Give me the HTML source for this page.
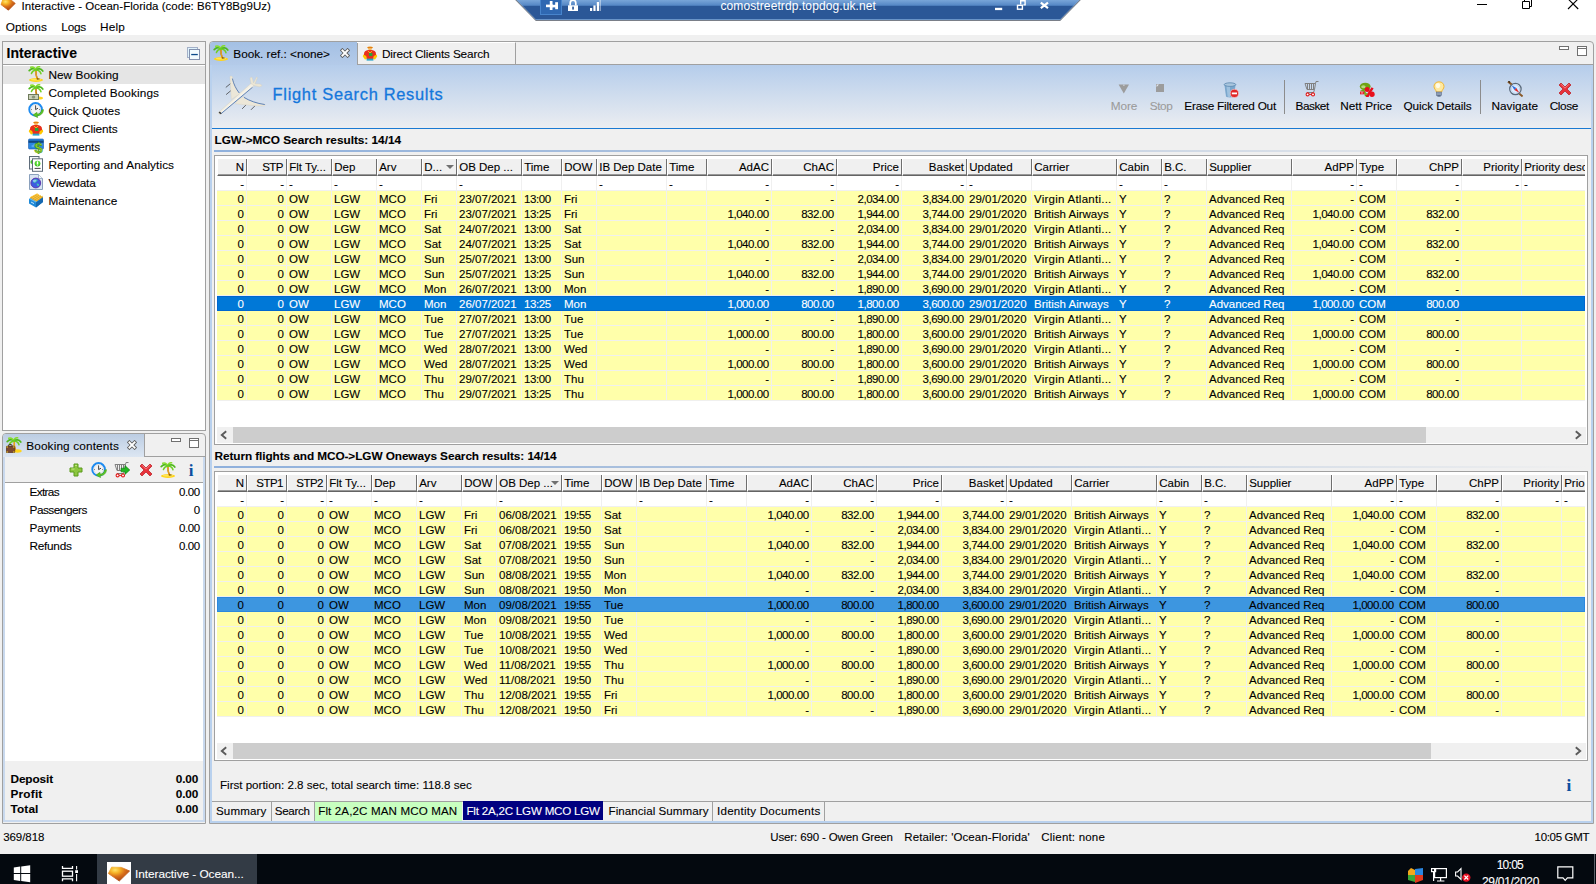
<!DOCTYPE html>
<html><head><meta charset="utf-8"><title>Interactive - Ocean-Florida</title>
<style>
html,body{margin:0;padding:0;}
body{width:1596px;height:884px;overflow:hidden;background:#f0f0f0;font-family:"Liberation Sans",sans-serif;font-size:11.5px;color:#000;position:relative;}
div,svg,i{position:absolute;box-sizing:content-box;}
.t,.c,.hc{-webkit-text-stroke:0.1px currentColor;}
.t{white-space:nowrap;}
.clip{overflow:hidden;background:#fff;}
.tblframe{border:1px solid #a0a0a0;background:#fff;}
.hc{top:0;height:17px;line-height:16px;background:#f0f0f0;border-left:1px solid #fff;border-right:1px solid #6e6e6e;border-bottom:1px solid #646464;box-shadow:inset 0 -1px 0 #989898;white-space:nowrap;overflow:hidden;font-size:11.5px;box-sizing:border-box;}
.row{left:0;width:1500px;height:15px;}
.row .c{top:0;height:15px;line-height:16px;white-space:nowrap;overflow:hidden;border-right:1px solid #f0f0f0;border-bottom:1px solid #f0f0f0;padding-left:2px;box-sizing:border-box;}
.row .c.r{text-align:right;padding-right:2px;padding-left:0;}
.frow .c{background:#fff;}
.yrow .c{background:#ffffaa;border-color:#f0f0ee;}
.selA .c{background:#0078d7;color:#fff;border-color:#0078d7;}
.selB .c{background:#3d96e0;color:#000;border-color:#3d96e0;}
.row .c.n{letter-spacing:-0.45px;padding-right:2.4px;}
.row .c.tm{letter-spacing:-0.4px;}
.row .c.vg{letter-spacing:0.25px;}
.hsb{background:#f0f0f0;}
.thumb{top:0;height:16px;background:#cdcdcd;}
.sbl{left:0;top:0;}
.sbr{right:0;top:0;}
.sorta{right:2px;top:6px;width:0;height:0;border-left:4px solid transparent;border-right:4px solid transparent;border-top:4px solid #707070;}
</style></head><body>

<div style="left:0px;top:0px;width:1596px;height:35px;background:#fff;"></div>
<svg style="left:0;top:0" width="20" height="12" viewBox="0 0 20 12"><defs><radialGradient id="gem" cx="0.32" cy="0.2" r="0.75"><stop offset="0" stop-color="#ffe46a"/><stop offset="0.3" stop-color="#f6b326"/><stop offset="0.62" stop-color="#d9701a"/><stop offset="1" stop-color="#b04a12"/></radialGradient></defs><path d="M1 4.6 L2.8 -0.5 L10.5 -0.5 L15.2 3.4 L8.4 10.2 Z" fill="url(#gem)" stroke="url(#gem)" stroke-width="0.8" stroke-linejoin="round"/></svg>
<div class="t" style="left:21.6px;top:-4px;line-height:20px;font-size:11.5px;color:#000;letter-spacing:0.028px;">Interactive - Ocean-Florida (code: B6TY8Bg9Uz)</div>
<div class="t" style="left:5.7px;top:17px;line-height:20px;font-size:11.8px;color:#000;letter-spacing:0.092px;">Options</div>
<div class="t" style="left:61.3px;top:17px;line-height:20px;font-size:11.8px;color:#000;letter-spacing:-0.223px;">Logs</div>
<div class="t" style="left:100px;top:17px;line-height:20px;font-size:11.8px;color:#000;letter-spacing:0.184px;">Help</div>
<svg style="left:1470px;top:0" width="126" height="16" viewBox="1470 0 126 16"><g stroke="#000" stroke-width="1" fill="none"><path d="M1477 4.5 H1487"/><path d="M1522.5 1.5 H1529.5 V8.5 H1522.5 Z M1524.5 1.5 V-1 M1529.5 6.5 H1531.5 V-1"/><path d="M1568 -1.2 L1578.2 9 M1578.2 -1.2 L1568 9" stroke-width="1.1"/></g></svg>
<svg style="left:505px;top:0" width="590" height="23" viewBox="505 0 590 23">
<defs><linearGradient id="rdp" x1="0" y1="0" x2="0" y2="1"><stop offset="0" stop-color="#79a5d8"/><stop offset="0.28" stop-color="#5587c5"/><stop offset="0.31" stop-color="#2b5797"/><stop offset="1" stop-color="#2b5797"/></linearGradient></defs>
<path d="M515.2 0 L1080.8 0 L1060.2 21 L535.8 21 Z" fill="#7a7f88"/>
<path d="M516.6 0 L1079.4 0 L1060 20 L536 20 Z" fill="#7fa8d8"/>
<path d="M517 0 L1079 0 L1060.2 19.2 L535.8 19.2 Z" fill="url(#rdp)"/>
<rect x="540.5" y="-1" width="21" height="15.5" fill="#2f68b2" stroke="#4784cc" stroke-width="1"/>
<g fill="#fff"><rect x="546" y="4.6" width="7" height="2.6"/><rect x="549.8" y="1" width="2.7" height="9"/><rect x="552" y="4.8" width="4" height="2.6"/><rect x="555.2" y="2.2" width="2.8" height="7"/></g>
<g fill="#fff"><rect x="568" y="5.3" width="10" height="5.7"/><path d="M570.2 5.5 V3 a2.8 2.8 0 0 1 5.6 0 V5.5" fill="none" stroke="#fff" stroke-width="1.7"/></g>
<rect x="572.2" y="6.6" width="1.7" height="3" fill="#2b5797"/>
<g fill="#fff"><rect x="590" y="8" width="2.2" height="3"/><rect x="593.4" y="5.4" width="2.2" height="5.6"/><rect x="596.8" y="2" width="2.2" height="9"/><rect x="599.6" y="0" width="1.2" height="11" opacity="0.55"/></g>
<rect x="995" y="7.8" width="7.2" height="2.3" fill="#fff"/>
<g stroke="#fff" stroke-width="2.2" fill="none"><path d="M1040.8 2.6 L1048 8.2 M1048 2.6 L1040.8 8.2"/></g>
<g stroke="#fff" stroke-width="1.4" fill="none"><rect x="1017.5" y="5.3" width="4.9" height="3.9"/><path d="M1020.7 4.6 V0.7 H1025.1 V4.9 H1023.4"/></g>
<text x="720.5" y="10.3" fill="#fff" font-family="Liberation Sans, sans-serif" font-size="12" letter-spacing="0.1">comostreetrdp.topdog.uk.net</text>
</svg>
<div style="left:2px;top:41px;width:202px;height:388px;border:1px solid #a0a0a0;background:#fff;"></div>
<div style="left:3px;top:42px;width:202px;height:22px;background:#f0f0f0;border-bottom:1px solid #a0a0a0;"></div>
<div class="t" style="left:6.5px;top:43px;line-height:20px;font-size:14px;color:#000;font-weight:700;letter-spacing:0.041px;">Interactive</div>
<svg style="left:186px;top:46px" width="16" height="14" viewBox="0 0 16 14"><rect x="1.5" y="1.5" width="10" height="10" fill="#dff3fc" stroke="#a3b0c8"/><rect x="3.5" y="3.5" width="10" height="10" fill="#f2fbff" stroke="#8391ae"/><rect x="5.2" y="7.9" width="6.6" height="1.3" fill="#0a4a8a"/></svg>
<div style="left:3px;top:66px;width:202px;height:18px;background:#e5e5e5;"></div>
<div class="t" style="left:48.4px;top:65px;line-height:20px;font-size:11.8px;color:#000;letter-spacing:0.071px;">New Booking</div>
<div class="t" style="left:48.4px;top:83px;line-height:20px;font-size:11.8px;color:#000;letter-spacing:0.102px;">Completed Bookings</div>
<div class="t" style="left:48.4px;top:101px;line-height:20px;font-size:11.8px;color:#000;letter-spacing:0.019px;">Quick Quotes</div>
<div class="t" style="left:48.4px;top:119px;line-height:20px;font-size:11.8px;color:#000;letter-spacing:-0.061px;">Direct Clients</div>
<div class="t" style="left:48.4px;top:137px;line-height:20px;font-size:11.8px;color:#000;letter-spacing:-0.094px;">Payments</div>
<div class="t" style="left:48.4px;top:155px;line-height:20px;font-size:11.8px;color:#000;letter-spacing:0.076px;">Reporting and Analytics</div>
<div class="t" style="left:48.4px;top:173px;line-height:20px;font-size:11.8px;color:#000;letter-spacing:-0.129px;">Viewdata</div>
<div class="t" style="left:48.4px;top:191px;line-height:20px;font-size:11.8px;color:#000;letter-spacing:0.131px;">Maintenance</div>
<svg style="left:28px;top:66px" width="16" height="16" viewBox="0 0 16 16"><ellipse cx="8" cy="14" rx="7" ry="1.9" fill="#ffd41c"/><ellipse cx="8" cy="13.5" rx="5" ry="1" fill="#ffe55a"/><path d="M9.6 13.4 C8.2 10.5 7.6 7.5 8 4.2" fill="none" stroke="#c8800e" stroke-width="1.7"/><path d="M9.2 12 C8.4 10 8 8 8.2 5" fill="none" stroke="#f0b030" stroke-width="0.7"/><path d="M9 13 H11.5" stroke="#4a3010" stroke-width="0.8"/><g fill="none" stroke-linecap="round"><path d="M8 4 C6 2.2 3.5 2.2 1.2 4.6" stroke="#4fb81e" stroke-width="1.7"/><path d="M8 4 C6.5 1 4.5 0.6 2.8 1.2" stroke="#86dc2e" stroke-width="1.6"/><path d="M8 4 C8.2 1.6 9.6 0.6 11.6 0.8" stroke="#86dc2e" stroke-width="1.6"/><path d="M8 4 C10.2 2.2 13 2.4 14.8 5" stroke="#4fb81e" stroke-width="1.7"/><path d="M8 4 C5.8 4.2 4 5.6 3.4 7.6" stroke="#6fcf24" stroke-width="1.5"/><path d="M8.2 4 C10.6 4.2 12.4 5.6 13 7.8" stroke="#6fcf24" stroke-width="1.5"/></g></svg>
<svg style="left:28px;top:84px" width="16" height="16" viewBox="0 0 16 16"><ellipse cx="11" cy="14" rx="4" ry="1.6" fill="#ffd41c"/><path d="M9.2 13 C8.2 10.5 7.6 7.5 8 4.2" fill="none" stroke="#c8800e" stroke-width="1.7"/><g fill="none" stroke-linecap="round"><path d="M8 4 C6 2.2 3.5 2.2 1.2 4.6" stroke="#4fb81e" stroke-width="1.7"/><path d="M8 4 C6.5 1 4.5 0.6 2.8 1.2" stroke="#86dc2e" stroke-width="1.6"/><path d="M8 4 C8.2 1.6 9.6 0.6 11.6 0.8" stroke="#86dc2e" stroke-width="1.6"/><path d="M8 4 C10.2 2.2 13 2.4 14.8 5" stroke="#4fb81e" stroke-width="1.7"/><path d="M8 4 C5.8 4.2 4 5.6 3.4 7.6" stroke="#6fcf24" stroke-width="1.5"/><path d="M8.2 4 C10.6 4.2 12.4 5.6 13 7.8" stroke="#6fcf24" stroke-width="1.5"/></g><rect x="0.5" y="10.5" width="10" height="5" fill="#c9d1b8" stroke="#6f7a5c" stroke-width="1"/><ellipse cx="5.5" cy="13" rx="1.8" ry="1.5" fill="#8a947a"/></svg>
<svg style="left:28px;top:102px" width="16" height="16" viewBox="0 0 16 16"><circle cx="7.6" cy="7.4" r="6.3" fill="#fff" stroke="#1e8bf0" stroke-width="2"/><circle cx="7.6" cy="7.4" r="4.9" fill="#f4f4f4" stroke="#b8c4d0" stroke-width="0.5"/><path d="M7.6 7.6 V4 M7.6 7.6 L10 6.2" stroke="#333" stroke-width="0.9" fill="none"/><g fill="#555"><rect x="7.2" y="3" width="0.8" height="0.8"/><rect x="7.2" y="11" width="0.8" height="0.8"/><rect x="3.2" y="7" width="0.8" height="0.8"/><rect x="11.2" y="7" width="0.8" height="0.8"/></g><path d="M15.6 7.6 C15.4 11.4 12.6 14 9.4 13.6 L9.6 15.8 L5 13 L9 10.2 L9.2 12 C11.4 12.2 13.2 10.6 13.6 8 Z" fill="#5cc421" stroke="#3a9a12" stroke-width="0.4"/></svg>
<svg style="left:28px;top:120px" width="16" height="16" viewBox="0 0 16 16"><ellipse cx="8" cy="2.6" rx="2.6" ry="1.2" fill="#f6a21a"/><circle cx="8" cy="3.6" r="1.9" fill="#f7b860"/><path d="M5.6 2.6 H10.6" stroke="#e07a10" stroke-width="1"/><path d="M2.2 7.6 C3 5.4 5.4 5 8 5 C10.6 5 13 5.4 13.8 7.6 L14.2 11 L12 11.6 L11.6 14 H4.4 L4 11.6 L1.8 11 Z" fill="#e8301c"/><path d="M1.2 9.6 L0.8 11.6 L3 14.6 L4.8 14 L4.2 11 Z M14.8 9.6 L15.2 11.6 L13 14.6 L11.2 14 L11.8 11 Z" fill="#ffc800"/><rect x="7" y="8" width="3.4" height="3" fill="#2aa23a"/><rect x="4.6" y="13.6" width="6.8" height="2" fill="#2aa6c8"/><path d="M6 6 L8 8 L10 6" fill="none" stroke="#ffd21c" stroke-width="0.8"/></svg>
<svg style="left:28px;top:138px" width="16" height="16" viewBox="0 0 16 16"><rect x="0.5" y="1" width="15" height="10" rx="1" fill="#2a86e0" stroke="#1a5cb0" stroke-width="0.6"/><rect x="0.5" y="2.6" width="15" height="2.2" fill="#12467f"/><path d="M3 8 L7 5.4 L9 6.6 L5 9.4 Z" fill="#5aa8f0"/><text x="6.6" y="15.2" font-family="Liberation Sans, sans-serif" font-weight="700" font-size="14.5" fill="#8fd22a" stroke="#3f8a10" stroke-width="0.5">$</text></svg>
<svg style="left:28px;top:156px" width="16" height="16" viewBox="0 0 16 16"><rect x="1.5" y="0.5" width="9.5" height="12.5" fill="#f4f6f8" stroke="#5e6c7a" stroke-width="1"/><circle cx="4.4" cy="6" r="2" fill="#44c626"/><rect x="4.5" y="2.8" width="10" height="12.5" fill="#fff" stroke="#5e6c7a" stroke-width="1"/><circle cx="9.5" cy="7.6" r="2.9" fill="#3dc81e"/><circle cx="9.5" cy="7" r="2" fill="#7be25a"/><rect x="9" y="5.4" width="1" height="2.6" fill="#fff"/><rect x="9" y="8.6" width="1" height="1" fill="#fff"/><path d="M6.6 12.4 H12.6" stroke="#444" stroke-width="1"/></svg>
<svg style="left:28px;top:174px" width="16" height="16" viewBox="0 0 16 16"><path d="M1.5 0.5 H10.5 L14.5 4.5 V15.5 H1.5 Z" fill="#d9e4f2" stroke="#8aa0bc" stroke-width="1"/><path d="M10.5 0.5 V4.5 H14.5" fill="#f4f8fc" stroke="#8aa0bc" stroke-width="0.8"/><circle cx="7.8" cy="9" r="4.9" fill="#3d5ce0" stroke="#5a32a8" stroke-width="0.9"/><path d="M5 7 C6 5 8.6 4.8 9.6 6.4 C9 7.6 7.4 7.4 7.2 9 C6 9.2 5.4 8.2 5 7 Z M8.6 9.6 C10 9.2 11.2 10 11 11.4 C10 12.6 9 12 8.6 9.6 Z" fill="#46c8b4"/><ellipse cx="6.4" cy="6.8" rx="1.8" ry="1.1" fill="#a8c8ff" opacity="0.8"/></svg>
<svg style="left:28px;top:192px" width="16" height="16" viewBox="0 0 16 16"><path d="M1 7 L9 3 L15 5 L15 10 L8 15.4 L1 11.6 Z" fill="#1e8ad8"/><path d="M1 7 L8 10.4 L15 5 L9 3 Z" fill="#5cb8f4"/><path d="M8 10.4 V15.4 L15 10 V5 Z" fill="#1668b0"/><g stroke="#f0a010" stroke-width="1.5" fill="none"><path d="M2.4 6 L9.6 2.2"/><path d="M4 7 L11.2 3"/><path d="M5.8 8 L13 3.8"/><path d="M7.6 9 L14.6 4.6"/></g><g stroke="#ffd84a" stroke-width="0.7" fill="none"><path d="M2.4 5.4 L9.6 1.6"/><path d="M4 6.4 L11.2 2.4"/><path d="M5.8 7.4 L13 3.2"/><path d="M7.6 8.4 L14.6 4"/></g><path d="M3 10 L6 11.6" stroke="#bfe4ff" stroke-width="1"/></svg>
<div style="left:2px;top:433px;width:202px;height:389px;border:1px solid #a0a0a0;border-radius:4px 4px 0 0;background:#f0f0f0;"></div>
<div style="left:3px;top:434px;width:141px;height:23px;background:linear-gradient(#bccde3,#dce6f2);border-radius:3px 0 0 0;border-right:1px solid #a0a0a0;"></div>
<div style="left:144px;top:456px;width:61px;height:1px;background:#a0a0a0;"></div>
<div class="t" style="left:26.2px;top:436px;line-height:20px;font-size:11.8px;color:#000;letter-spacing:0.143px;">Booking contents</div>
<svg style="left:127px;top:440px" width="10" height="10" viewBox="0 0 10 10"><path d="M2.4 2.4 L7.6 7.6 M7.6 2.4 L2.4 7.6" stroke="#5c5c5c" stroke-width="3.6" stroke-linecap="square" fill="none"/><path d="M2.4 2.4 L7.6 7.6 M7.6 2.4 L2.4 7.6" stroke="#fff" stroke-width="1.9" stroke-linecap="square" fill="none"/></svg>
<svg style="left:170px;top:437px" width="32" height="13" viewBox="0 0 32 13"><g fill="#fff" stroke="#707070" stroke-width="1"><rect x="1.5" y="1.5" width="9" height="3"/><rect x="19.5" y="1.5" width="9" height="9"/><path d="M19.5 3.5 H28.5"/></g></svg>
<div style="left:3px;top:457px;width:202px;height:364px;border-left:2px solid #c9d9ee;border-right:2px solid #c9d9ee;border-bottom:2px solid #c9d9ee;width:198px;height:363px;"></div>
<div style="left:5px;top:482px;width:198px;height:1px;background:#a0a0a0;"></div>
<div style="left:5px;top:483px;width:198px;height:278px;background:#fff;"></div>
<div class="t" style="left:29.5px;top:482px;line-height:20px;font-size:11.8px;color:#000;letter-spacing:-0.656px;">Extras</div>
<div class="t" style="left:139.8px;top:482px;line-height:20px;font-size:11.5px;color:#000;letter-spacing:-0.4px;width:60px;text-align:right;">0.00</div>
<div class="t" style="left:29.5px;top:500px;line-height:20px;font-size:11.8px;color:#000;letter-spacing:-0.49px;">Passengers</div>
<div class="t" style="left:139.8px;top:500px;line-height:20px;font-size:11.5px;color:#000;letter-spacing:-0.4px;width:60px;text-align:right;">0</div>
<div class="t" style="left:29.5px;top:518px;line-height:20px;font-size:11.8px;color:#000;letter-spacing:-0.144px;">Payments</div>
<div class="t" style="left:139.8px;top:518px;line-height:20px;font-size:11.5px;color:#000;letter-spacing:-0.4px;width:60px;text-align:right;">0.00</div>
<div class="t" style="left:29.5px;top:536px;line-height:20px;font-size:11.8px;color:#000;letter-spacing:-0.265px;">Refunds</div>
<div class="t" style="left:139.8px;top:536px;line-height:20px;font-size:11.5px;color:#000;letter-spacing:-0.4px;width:60px;text-align:right;">0.00</div>
<div class="t" style="left:10.5px;top:769px;line-height:20px;font-size:11.8px;color:#000;font-weight:700;letter-spacing:-0.109px;">Deposit</div>
<div class="t" style="left:138px;top:769px;line-height:20px;font-size:11.8px;color:#000;font-weight:700;letter-spacing:-0.2px;width:60px;text-align:right;">0.00</div>
<div class="t" style="left:10.5px;top:784px;line-height:20px;font-size:11.8px;color:#000;font-weight:700;letter-spacing:0.198px;">Profit</div>
<div class="t" style="left:138px;top:784px;line-height:20px;font-size:11.8px;color:#000;font-weight:700;letter-spacing:-0.2px;width:60px;text-align:right;">0.00</div>
<div class="t" style="left:10.5px;top:799px;line-height:20px;font-size:11.8px;color:#000;font-weight:700;letter-spacing:0.138px;">Total</div>
<div class="t" style="left:138px;top:799px;line-height:20px;font-size:11.8px;color:#000;font-weight:700;letter-spacing:-0.2px;width:60px;text-align:right;">0.00</div>
<svg style="left:6px;top:437px" width="16" height="16" viewBox="0 0 16 16"><ellipse cx="11.5" cy="14" rx="4.2" ry="1.7" fill="#ffd41c"/><path d="M9.4 13 C8.4 10.5 7.8 7.5 8.2 4.2" fill="none" stroke="#e6a21a" stroke-width="1.7"/><g fill="none" stroke-linecap="round"><path d="M8 4 C6 2.2 3.5 2.2 1.2 4.6" stroke="#4fb81e" stroke-width="1.7"/><path d="M8 4 C6.5 1 4.5 0.6 2.8 1.2" stroke="#86dc2e" stroke-width="1.6"/><path d="M8 4 C8.2 1.6 9.6 0.6 11.6 0.8" stroke="#86dc2e" stroke-width="1.6"/><path d="M8 4 C10.2 2.2 13 2.4 14.8 5" stroke="#4fb81e" stroke-width="1.7"/><path d="M8 4 C5.8 4.2 4 5.6 3.4 7.6" stroke="#6fcf24" stroke-width="1.5"/><path d="M8.2 4 C10.6 4.2 12.4 5.6 13 7.8" stroke="#6fcf24" stroke-width="1.5"/></g><rect x="2.6" y="7.6" width="3.4" height="2.4" rx="0.8" fill="none" stroke="#4a2a1a" stroke-width="1"/><rect x="0.3" y="9.2" width="8.4" height="6.6" rx="0.8" fill="#7b4a32" stroke="#4a2a1a" stroke-width="0.7"/><g fill="#ffd41c"><rect x="0.6" y="9.4" width="1.2" height="1.2"/><rect x="7.2" y="9.4" width="1.2" height="1.2"/><rect x="0.6" y="14.4" width="1.2" height="1.2"/><rect x="7.2" y="14.4" width="1.2" height="1.2"/></g></svg>
<svg style="left:68px;top:462px" width="16" height="16" viewBox="0 0 16 16"><path d="M6 2 H10 V6 H14 V10 H10 V14 H6 V10 H2 V6 H6 Z" fill="#8cc63e" stroke="#5a9a1c" stroke-width="1" stroke-linejoin="round"/><path d="M7 3.4 H9 M3.4 7 H6.4" stroke="#c9ec8a" stroke-width="1" fill="none"/></svg>
<svg style="left:91px;top:462px" width="16" height="16" viewBox="0 0 16 16"><circle cx="7.6" cy="7.4" r="6.3" fill="#fff" stroke="#1e8bf0" stroke-width="2"/><circle cx="7.6" cy="7.4" r="4.9" fill="#f4f4f4" stroke="#b8c4d0" stroke-width="0.5"/><path d="M7.6 7.6 V4 M7.6 7.6 L10 6.2" stroke="#333" stroke-width="0.9" fill="none"/><g fill="#555"><rect x="7.2" y="3" width="0.8" height="0.8"/><rect x="7.2" y="11" width="0.8" height="0.8"/><rect x="3.2" y="7" width="0.8" height="0.8"/><rect x="11.2" y="7" width="0.8" height="0.8"/></g><path d="M15.6 7.6 C15.4 11.4 12.6 14 9.4 13.6 L9.6 15.8 L5 13 L9 10.2 L9.2 12 C11.4 12.2 13.2 10.6 13.6 8 Z" fill="#5cc421" stroke="#3a9a12" stroke-width="0.4"/></svg>
<svg style="left:114px;top:462px" width="16" height="16" viewBox="0 0 16 16"><g stroke="#808080" stroke-width="1" fill="none"><path d="M1 2.5 H11.5 L10.5 8.5 H3 Z"/><path d="M3.5 2.5 V8.5 M5.5 2.5 V8.5 M7.5 2.5 V8.5 M9.5 2.5 V8.5"/><path d="M11.5 2.5 L12 0.5 H14.5"/><path d="M10.5 8.5 L9.5 11.5 H3"/></g><circle cx="3.6" cy="13.4" r="1.5" fill="#fff" stroke="#e01818" stroke-width="1.1"/><circle cx="9" cy="13.4" r="1.5" fill="#fff" stroke="#e01818" stroke-width="1.1"/><path d="M5.1 13.4 H7.5" stroke="#e01818" stroke-width="1"/><path d="M7 6.2 H11 V3.6 L15.8 8 L11 12.4 V9.8 H7 Z" fill="#22b822" stroke="#0e7a0e" stroke-width="0.6"/></svg>
<svg style="left:137.5px;top:462px" width="16" height="16" viewBox="0 0 16 16"><path d="M2 4 L4 2 L8 6 L12 2 L14 4 L10 8 L14 12 L12 14 L8 10 L4 14 L2 12 L6 8 Z" fill="#e8323a" stroke="#b81820" stroke-width="0.7" stroke-linejoin="round"/><path d="M4 3.2 L8 7.2 L12 3.2" fill="none" stroke="#f8888c" stroke-width="0.9"/></svg>
<svg style="left:160px;top:462px" width="16" height="16" viewBox="0 0 16 16"><ellipse cx="8" cy="14" rx="7" ry="1.9" fill="#ffd41c"/><ellipse cx="8" cy="13.5" rx="5" ry="1" fill="#ffe55a"/><path d="M9.6 13.4 C8.2 10.5 7.6 7.5 8 4.2" fill="none" stroke="#c8800e" stroke-width="1.7"/><path d="M9.2 12 C8.4 10 8 8 8.2 5" fill="none" stroke="#f0b030" stroke-width="0.7"/><path d="M9 13 H11.5" stroke="#4a3010" stroke-width="0.8"/><g fill="none" stroke-linecap="round"><path d="M8 4 C6 2.2 3.5 2.2 1.2 4.6" stroke="#4fb81e" stroke-width="1.7"/><path d="M8 4 C6.5 1 4.5 0.6 2.8 1.2" stroke="#86dc2e" stroke-width="1.6"/><path d="M8 4 C8.2 1.6 9.6 0.6 11.6 0.8" stroke="#86dc2e" stroke-width="1.6"/><path d="M8 4 C10.2 2.2 13 2.4 14.8 5" stroke="#4fb81e" stroke-width="1.7"/><path d="M8 4 C5.8 4.2 4 5.6 3.4 7.6" stroke="#6fcf24" stroke-width="1.5"/><path d="M8.2 4 C10.6 4.2 12.4 5.6 13 7.8" stroke="#6fcf24" stroke-width="1.5"/></g></svg>
<svg style="left:183px;top:462px" width="16" height="16" viewBox="0 0 16 16"><text x="8" y="14" text-anchor="middle" font-family="Liberation Serif, serif" font-weight="700" font-size="17" fill="#0c4fa0">i</text></svg>
<div style="left:209px;top:41px;width:1383px;height:781px;border:1px solid #a0a0a0;border-radius:4px 4px 0 0;background:#f0f0f0;"></div>
<div style="left:210px;top:42px;width:147px;height:23px;background:linear-gradient(#a4c0e4,#b4cbe9);border-radius:3px 0 0 0;border-right:1px solid #a0a0a0;"></div>
<div style="left:357px;top:42px;width:158px;height:22px;border-right:1px solid #a0a0a0;border-top:1px solid #fff;height:21px;"></div>
<div style="left:357px;top:64px;width:1236px;height:1px;background:#a0a0a0;"></div>
<svg style="left:213px;top:44.5px" width="16" height="16" viewBox="0 0 16 16"><ellipse cx="8" cy="14" rx="7" ry="1.9" fill="#ffd41c"/><ellipse cx="8" cy="13.5" rx="5" ry="1" fill="#ffe55a"/><path d="M9.6 13.4 C8.2 10.5 7.6 7.5 8 4.2" fill="none" stroke="#c8800e" stroke-width="1.7"/><path d="M9.2 12 C8.4 10 8 8 8.2 5" fill="none" stroke="#f0b030" stroke-width="0.7"/><path d="M9 13 H11.5" stroke="#4a3010" stroke-width="0.8"/><g fill="none" stroke-linecap="round"><path d="M8 4 C6 2.2 3.5 2.2 1.2 4.6" stroke="#4fb81e" stroke-width="1.7"/><path d="M8 4 C6.5 1 4.5 0.6 2.8 1.2" stroke="#86dc2e" stroke-width="1.6"/><path d="M8 4 C8.2 1.6 9.6 0.6 11.6 0.8" stroke="#86dc2e" stroke-width="1.6"/><path d="M8 4 C10.2 2.2 13 2.4 14.8 5" stroke="#4fb81e" stroke-width="1.7"/><path d="M8 4 C5.8 4.2 4 5.6 3.4 7.6" stroke="#6fcf24" stroke-width="1.5"/><path d="M8.2 4 C10.6 4.2 12.4 5.6 13 7.8" stroke="#6fcf24" stroke-width="1.5"/></g></svg>
<svg style="left:362px;top:45px" width="16" height="16" viewBox="0 0 16 16"><ellipse cx="8" cy="2.6" rx="2.6" ry="1.2" fill="#f6a21a"/><circle cx="8" cy="3.6" r="1.9" fill="#f7b860"/><path d="M5.6 2.6 H10.6" stroke="#e07a10" stroke-width="1"/><path d="M2.2 7.6 C3 5.4 5.4 5 8 5 C10.6 5 13 5.4 13.8 7.6 L14.2 11 L12 11.6 L11.6 14 H4.4 L4 11.6 L1.8 11 Z" fill="#e8301c"/><path d="M1.2 9.6 L0.8 11.6 L3 14.6 L4.8 14 L4.2 11 Z M14.8 9.6 L15.2 11.6 L13 14.6 L11.2 14 L11.8 11 Z" fill="#ffc800"/><rect x="7" y="8" width="3.4" height="3" fill="#2aa23a"/><rect x="4.6" y="13.6" width="6.8" height="2" fill="#2aa6c8"/><path d="M6 6 L8 8 L10 6" fill="none" stroke="#ffd21c" stroke-width="0.8"/></svg>
<div class="t" style="left:233.3px;top:44px;line-height:20px;font-size:11.8px;color:#000;letter-spacing:-0.021px;">Book. ref.: &lt;none&gt;</div>
<div class="t" style="left:382px;top:44px;line-height:20px;font-size:11.8px;color:#000;letter-spacing:-0.167px;">Direct Clients Search</div>
<svg style="left:340px;top:48px" width="10" height="10" viewBox="0 0 10 10"><path d="M2.4 2.4 L7.6 7.6 M7.6 2.4 L2.4 7.6" stroke="#5c5c5c" stroke-width="3.6" stroke-linecap="square" fill="none"/><path d="M2.4 2.4 L7.6 7.6 M7.6 2.4 L2.4 7.6" stroke="#fff" stroke-width="1.9" stroke-linecap="square" fill="none"/></svg>
<svg style="left:1558px;top:45px" width="32" height="13" viewBox="0 0 32 13"><g fill="#fff" stroke="#707070" stroke-width="1"><rect x="1.5" y="1.5" width="9" height="3"/><rect x="19.5" y="1.5" width="9" height="9"/><path d="M19.5 3.5 H28.5"/></g></svg>
<div style="left:210px;top:65px;width:2px;height:757px;background:#b9d1ee;"></div>
<div style="left:1591px;top:65px;width:2px;height:757px;background:#b9d1ee;"></div>
<div style="left:210px;top:821px;width:1383px;height:2px;background:#b9d1ee;"></div>
<div style="left:212px;top:65px;width:1379px;height:63px;background:linear-gradient(#b5cdeb,#ebedf1);"></div>
<div style="left:212px;top:128px;width:1379px;height:1px;background:#1979d2;"></div>
<div class="t" style="left:272.6px;top:84px;line-height:20px;font-size:16.4px;color:#1477dc;letter-spacing:0.715px;-webkit-text-stroke:0.3px #1477dc;">Flight Search Results</div>
<svg style="left:212px;top:66px" width="80" height="60" viewBox="0 0 1179 884">
<g stroke="#3a3a3a" stroke-width="11" stroke-linecap="round"><path d="M208 312 L290 245"/><path d="M212 418 L300 345"/><path d="M448 628 L525 548"/><path d="M578 642 L660 560"/></g>
<path d="M278 148 C262 150 262 165 266 185 L285 492 L410 410 C360 340 320 250 300 160 C296 150 288 146 278 148 Z" fill="#ece7d8" stroke="#d4cebc" stroke-width="5"/>
<path d="M300 185 C320 270 355 340 402 398" fill="none" stroke="#2f62b0" stroke-width="11"/>
<path d="M462 452 C540 505 660 550 775 562 C790 566 790 580 775 586 C740 596 600 585 340 556 L380 500 Z" fill="#ece7d8" stroke="#d4cebc" stroke-width="5"/>
<path d="M470 462 C550 512 660 552 778 568" fill="none" stroke="#2f62b0" stroke-width="11"/>
<path d="M578 272 L560 185 C565 170 585 160 592 170 L612 250 L655 165 C662 158 672 168 668 178 L634 262 L700 264 C720 268 738 280 734 290 C720 304 700 306 688 304 L604 284 Z" fill="#ebe6d6" stroke="#cfc9b6" stroke-width="5"/>
<path d="M96 684 C90 698 108 720 130 710 L608 310 C624 294 600 254 566 266 Z" fill="#f3efe3" stroke="#d2ccba" stroke-width="5"/>
<path d="M150 676 L560 312" fill="none" stroke="#fbf9f2" stroke-width="10"/>
<path d="M134 702 L598 312" fill="none" stroke="#2f62b0" stroke-width="11"/>
<path d="M98 684 L122 712 L142 698 L116 672 Z" fill="#3c3c3c"/>
</svg>
<div class="t" style="left:1110.7px;top:96px;line-height:20px;font-size:11.8px;color:#9b9b9b;letter-spacing:-0.098px;">More</div>
<div class="t" style="left:1149.7px;top:96px;line-height:20px;font-size:11.8px;color:#9b9b9b;letter-spacing:-0.42px;">Stop</div>
<div class="t" style="left:1184.3px;top:96px;line-height:20px;font-size:11.8px;color:#000;letter-spacing:-0.224px;">Erase Filtered Out</div>
<div class="t" style="left:1295.5px;top:96px;line-height:20px;font-size:11.8px;color:#000;letter-spacing:-0.463px;">Basket</div>
<div class="t" style="left:1340.3px;top:96px;line-height:20px;font-size:11.8px;color:#000;letter-spacing:-0.01px;">Nett Price</div>
<div class="t" style="left:1403.5px;top:96px;line-height:20px;font-size:11.8px;color:#000;letter-spacing:-0.115px;">Quick Details</div>
<div class="t" style="left:1491.5px;top:96px;line-height:20px;font-size:11.8px;color:#000;letter-spacing:-0.008px;">Navigate</div>
<div class="t" style="left:1549.7px;top:96px;line-height:20px;font-size:11.8px;color:#000;letter-spacing:-0.374px;">Close</div>
<div style="left:1284px;top:80px;width:1px;height:34px;background:#8c8c8c;"></div>
<div style="left:1480px;top:80px;width:1px;height:34px;background:#8c8c8c;"></div>
<svg style="left:1116px;top:80.5px" width="16" height="16" viewBox="0 0 16 16"><path d="M2.6 3.6 H13 L7.8 12.6 Z" fill="#9c9c9c"/><rect x="7.4" y="3.6" width="1" height="1.4" fill="#d8dde6"/></svg>
<svg style="left:1152px;top:80px" width="16" height="16" viewBox="0 0 16 16"><rect x="4" y="4" width="8" height="8" fill="#9c9c9c"/><path d="M4.6 4.6 H7 L4.6 7 Z" fill="#e6eaf2"/></svg>
<svg style="left:1223px;top:81.5px" width="16" height="16" viewBox="0 0 16 16"><path d="M1.4 2.6 L3 14.6 C5 15.8 9 15.8 11 14.6 L12.6 2.6 Z" fill="#7aa6cc"/><path d="M3.4 4 L4.6 14.6 C5.6 15 6.4 15.1 7 15.1 L7 4 Z" fill="#a8c8e4" opacity="0.8"/><ellipse cx="7" cy="2.6" rx="5.8" ry="1.8" fill="#a9c6de" stroke="#5b86ae" stroke-width="0.8"/><circle cx="11.4" cy="11.4" r="4.1" fill="#e02626" stroke="#f6c6c6" stroke-width="0.7"/><rect x="8.8" y="10.5" width="5.2" height="1.8" fill="#fff"/></svg>
<svg style="left:1303.5px;top:80.8px" width="16" height="16" viewBox="0 0 16 16"><g stroke="#808080" stroke-width="1" fill="none"><path d="M1 2.5 H11.5 L10.5 8.5 H3 Z"/><path d="M3.5 2.5 V8.5 M5.5 2.5 V8.5 M7.5 2.5 V8.5 M9.5 2.5 V8.5"/><path d="M11.5 2.5 L12 0.5 H14.5"/><path d="M10.5 8.5 L9.5 11.5 H3"/></g><circle cx="3.6" cy="13.4" r="1.5" fill="#fff" stroke="#e01818" stroke-width="1.1"/><circle cx="9" cy="13.4" r="1.5" fill="#fff" stroke="#e01818" stroke-width="1.1"/><path d="M5.1 13.4 H7.5" stroke="#e01818" stroke-width="1"/></svg>
<svg style="left:1358.5px;top:80.6px" width="16" height="16" viewBox="0 0 16 16"><ellipse cx="6.2" cy="5.6" rx="5.4" ry="3.9" fill="#6fa414"/><ellipse cx="4.4" cy="5.8" rx="2.2" ry="1.5" fill="#b9d97c"/><path d="M0.8 10 L4 8.6 L6 9.4 L8 14.6 L6 15.4 L4.6 10.6 Z" fill="#6fa414"/><g fill="#e8101c"><rect x="1" y="10.6" width="4.2" height="2.7"/><circle cx="8.2" cy="8.6" r="2.5"/><circle cx="13" cy="13.2" r="2.7"/><circle cx="8.4" cy="14.6" r="1.7"/><path d="M12.6 6.2 L14.6 7.6 L9 16 L7 14.6 Z"/></g><rect x="1.8" y="11.5" width="2.4" height="0.9" fill="#ffd0d0"/><ellipse cx="7.2" cy="13" rx="1.4" ry="1" fill="#7db52a"/></svg>
<svg style="left:1431px;top:81px" width="16" height="16" viewBox="0 0 16 16"><path d="M8 0.8 C4.6 0.8 3 3.2 3 5.4 C3 7.8 5 8.8 5.4 11 H10.6 C11 8.8 13 7.8 13 5.4 C13 3.2 11.4 0.8 8 0.8 Z" fill="#ffe9a0" stroke="#f2b632" stroke-width="1"/><ellipse cx="7" cy="4.6" rx="2.2" ry="2.6" fill="#fffbe6"/><rect x="5.6" y="11" width="4.8" height="3.4" fill="#8c9cb4" stroke="#5c6c88" stroke-width="0.6"/><rect x="6.4" y="14.4" width="3.2" height="1.2" fill="#4c5c78"/></svg>
<svg style="left:1506.6px;top:80.8px" width="16" height="16" viewBox="0 0 16 16"><circle cx="8.4" cy="8" r="5.7" fill="#eef6ff" stroke="#5a6a7c" stroke-width="1.3"/><circle cx="8.4" cy="8" r="4.3" fill="#dcecff" stroke="#9ab8dc" stroke-width="0.6"/><path d="M4.6 4.2 L9.4 7 L7.4 9 Z" fill="#2a6ee0"/><path d="M12.2 11.8 L7.4 9 L9.4 7 Z" fill="#e02a2a"/><path d="M1 0.6 L4.6 3.4 M12.4 12.8 L15.6 15.4" stroke="#8a5a2a" stroke-width="2"/><path d="M1.6 0.2 L3 1.6" stroke="#3a2a1a" stroke-width="1.4"/></svg>
<svg style="left:1557px;top:81px" width="16" height="16" viewBox="0 0 16 16"><path d="M2 4 L4 2 L8 6 L12 2 L14 4 L10 8 L14 12 L12 14 L8 10 L4 14 L2 12 L6 8 Z" fill="#e8323a" stroke="#b81820" stroke-width="0.7" stroke-linejoin="round"/><path d="M4 3.2 L8 7.2 L12 3.2" fill="none" stroke="#f8888c" stroke-width="0.9"/></svg>
<div class="t" style="left:214.5px;top:130px;line-height:20px;font-size:11.8px;color:#000;font-weight:700;letter-spacing:-0.015px;">LGW-&gt;MCO Search results: 14/14</div>
<div style="left:214px;top:150px;width:1375px;height:2px;background:linear-gradient(90deg,#8fb0dc,#b9c9de 50%,#f0f0f0);"></div>
<div class="t" style="left:214.5px;top:446px;line-height:20px;font-size:11.8px;color:#000;font-weight:700;letter-spacing:-0.078px;">Return flights and MCO-&gt;LGW Oneways Search results: 14/14</div>
<div style="left:214px;top:466px;width:1375px;height:2px;background:linear-gradient(90deg,#8fb0dc,#b9c9de 50%,#f0f0f0);"></div>
<div class="tblframe" style="left:214px;top:155px;width:1372px;height:288px;"></div>
<div class="clip" style="left:217px;top:159px;width:1368px;height:266px;">
<div class="hc" style="left:0px;width:30px;text-align:right;padding-right:2px;">N</div>
<div class="hc" style="left:30px;width:40px;text-align:right;padding-right:2px;letter-spacing:-0.5px;padding-right:3px;">STP</div>
<div class="hc" style="left:70px;width:45px;padding-left:1.2px;">Flt Ty...</div>
<div class="hc" style="left:115px;width:45px;padding-left:1.2px;">Dep</div>
<div class="hc" style="left:160px;width:45px;padding-left:1.2px;">Arv</div>
<div class="hc" style="left:205px;width:35px;padding-left:1.2px;">D...<i class="sorta"></i></div>
<div class="hc" style="left:240px;width:65px;padding-left:1.2px;">OB Dep ...</div>
<div class="hc" style="left:305px;width:40px;padding-left:1.2px;">Time</div>
<div class="hc" style="left:345px;width:35px;padding-left:1.2px;">DOW</div>
<div class="hc" style="left:380px;width:70px;padding-left:1.2px;">IB Dep Date</div>
<div class="hc" style="left:450px;width:40px;padding-left:1.2px;">Time</div>
<div class="hc" style="left:490px;width:65px;text-align:right;padding-right:2px;">AdAC</div>
<div class="hc" style="left:555px;width:65px;text-align:right;padding-right:2px;">ChAC</div>
<div class="hc" style="left:620px;width:65px;text-align:right;padding-right:2px;">Price</div>
<div class="hc" style="left:685px;width:65px;text-align:right;padding-right:2px;">Basket</div>
<div class="hc" style="left:750px;width:65px;padding-left:1.2px;">Updated</div>
<div class="hc" style="left:815px;width:85px;padding-left:1.2px;">Carrier</div>
<div class="hc" style="left:900px;width:45px;padding-left:1.2px;">Cabin</div>
<div class="hc" style="left:945px;width:45px;padding-left:1.2px;">B.C.</div>
<div class="hc" style="left:990px;width:85px;padding-left:1.2px;">Supplier</div>
<div class="hc" style="left:1075px;width:65px;text-align:right;padding-right:2px;">AdPP</div>
<div class="hc" style="left:1140px;width:40px;padding-left:1.2px;">Type</div>
<div class="hc" style="left:1180px;width:65px;text-align:right;padding-right:2px;">ChPP</div>
<div class="hc" style="left:1245px;width:60px;text-align:right;padding-right:2px;">Priority</div>
<div class="hc" style="left:1305px;width:90px;padding-left:1.2px;">Priority desc</div>
<div class="row frow" style="top:17px;">
<div class="c r" style="left:0px;width:30px;">-</div>
<div class="c r" style="left:30px;width:40px;">-</div>
<div class="c" style="left:70px;width:45px;">-</div>
<div class="c" style="left:115px;width:45px;">-</div>
<div class="c" style="left:160px;width:45px;">-</div>
<div class="c" style="left:205px;width:35px;"></div>
<div class="c" style="left:240px;width:65px;">-</div>
<div class="c" style="left:305px;width:40px;"></div>
<div class="c" style="left:345px;width:35px;"></div>
<div class="c" style="left:380px;width:70px;">-</div>
<div class="c" style="left:450px;width:40px;">-</div>
<div class="c r" style="left:490px;width:65px;">-</div>
<div class="c r" style="left:555px;width:65px;">-</div>
<div class="c r" style="left:620px;width:65px;">-</div>
<div class="c r" style="left:685px;width:65px;">-</div>
<div class="c" style="left:750px;width:65px;">-</div>
<div class="c" style="left:815px;width:85px;"></div>
<div class="c" style="left:900px;width:45px;">-</div>
<div class="c" style="left:945px;width:45px;">-</div>
<div class="c" style="left:990px;width:85px;"></div>
<div class="c r" style="left:1075px;width:65px;">-</div>
<div class="c" style="left:1140px;width:40px;">-</div>
<div class="c r" style="left:1180px;width:65px;">-</div>
<div class="c r" style="left:1245px;width:60px;">-</div>
<div class="c" style="left:1305px;width:90px;">-</div>
</div>
<div class="row yrow" style="top:32px;">
<div class="c r" style="left:0px;width:30px;">0</div>
<div class="c r" style="left:30px;width:40px;">0</div>
<div class="c" style="left:70px;width:45px;">OW</div>
<div class="c" style="left:115px;width:45px;">LGW</div>
<div class="c" style="left:160px;width:45px;">MCO</div>
<div class="c" style="left:205px;width:35px;">Fri</div>
<div class="c" style="left:240px;width:65px;">23/07/2021</div>
<div class="c tm" style="left:305px;width:40px;">13:00</div>
<div class="c" style="left:345px;width:35px;">Fri</div>
<div class="c" style="left:380px;width:70px;"></div>
<div class="c" style="left:450px;width:40px;"></div>
<div class="c r" style="left:490px;width:65px;">-</div>
<div class="c r" style="left:555px;width:65px;">-</div>
<div class="c r n" style="left:620px;width:65px;">2,034.00</div>
<div class="c r n" style="left:685px;width:65px;">3,834.00</div>
<div class="c" style="left:750px;width:65px;">29/01/2020</div>
<div class="c vg" style="left:815px;width:85px;">Virgin Atlanti...</div>
<div class="c" style="left:900px;width:45px;">Y</div>
<div class="c" style="left:945px;width:45px;">?</div>
<div class="c" style="left:990px;width:85px;">Advanced Req</div>
<div class="c r" style="left:1075px;width:65px;">-</div>
<div class="c" style="left:1140px;width:40px;">COM</div>
<div class="c r" style="left:1180px;width:65px;">-</div>
<div class="c r" style="left:1245px;width:60px;"></div>
<div class="c" style="left:1305px;width:90px;"></div>
</div>
<div class="row yrow" style="top:47px;">
<div class="c r" style="left:0px;width:30px;">0</div>
<div class="c r" style="left:30px;width:40px;">0</div>
<div class="c" style="left:70px;width:45px;">OW</div>
<div class="c" style="left:115px;width:45px;">LGW</div>
<div class="c" style="left:160px;width:45px;">MCO</div>
<div class="c" style="left:205px;width:35px;">Fri</div>
<div class="c" style="left:240px;width:65px;">23/07/2021</div>
<div class="c tm" style="left:305px;width:40px;">13:25</div>
<div class="c" style="left:345px;width:35px;">Fri</div>
<div class="c" style="left:380px;width:70px;"></div>
<div class="c" style="left:450px;width:40px;"></div>
<div class="c r n" style="left:490px;width:65px;">1,040.00</div>
<div class="c r n" style="left:555px;width:65px;">832.00</div>
<div class="c r n" style="left:620px;width:65px;">1,944.00</div>
<div class="c r n" style="left:685px;width:65px;">3,744.00</div>
<div class="c" style="left:750px;width:65px;">29/01/2020</div>
<div class="c" style="left:815px;width:85px;">British Airways</div>
<div class="c" style="left:900px;width:45px;">Y</div>
<div class="c" style="left:945px;width:45px;">?</div>
<div class="c" style="left:990px;width:85px;">Advanced Req</div>
<div class="c r n" style="left:1075px;width:65px;">1,040.00</div>
<div class="c" style="left:1140px;width:40px;">COM</div>
<div class="c r n" style="left:1180px;width:65px;">832.00</div>
<div class="c r" style="left:1245px;width:60px;"></div>
<div class="c" style="left:1305px;width:90px;"></div>
</div>
<div class="row yrow" style="top:62px;">
<div class="c r" style="left:0px;width:30px;">0</div>
<div class="c r" style="left:30px;width:40px;">0</div>
<div class="c" style="left:70px;width:45px;">OW</div>
<div class="c" style="left:115px;width:45px;">LGW</div>
<div class="c" style="left:160px;width:45px;">MCO</div>
<div class="c" style="left:205px;width:35px;">Sat</div>
<div class="c" style="left:240px;width:65px;">24/07/2021</div>
<div class="c tm" style="left:305px;width:40px;">13:00</div>
<div class="c" style="left:345px;width:35px;">Sat</div>
<div class="c" style="left:380px;width:70px;"></div>
<div class="c" style="left:450px;width:40px;"></div>
<div class="c r" style="left:490px;width:65px;">-</div>
<div class="c r" style="left:555px;width:65px;">-</div>
<div class="c r n" style="left:620px;width:65px;">2,034.00</div>
<div class="c r n" style="left:685px;width:65px;">3,834.00</div>
<div class="c" style="left:750px;width:65px;">29/01/2020</div>
<div class="c vg" style="left:815px;width:85px;">Virgin Atlanti...</div>
<div class="c" style="left:900px;width:45px;">Y</div>
<div class="c" style="left:945px;width:45px;">?</div>
<div class="c" style="left:990px;width:85px;">Advanced Req</div>
<div class="c r" style="left:1075px;width:65px;">-</div>
<div class="c" style="left:1140px;width:40px;">COM</div>
<div class="c r" style="left:1180px;width:65px;">-</div>
<div class="c r" style="left:1245px;width:60px;"></div>
<div class="c" style="left:1305px;width:90px;"></div>
</div>
<div class="row yrow" style="top:77px;">
<div class="c r" style="left:0px;width:30px;">0</div>
<div class="c r" style="left:30px;width:40px;">0</div>
<div class="c" style="left:70px;width:45px;">OW</div>
<div class="c" style="left:115px;width:45px;">LGW</div>
<div class="c" style="left:160px;width:45px;">MCO</div>
<div class="c" style="left:205px;width:35px;">Sat</div>
<div class="c" style="left:240px;width:65px;">24/07/2021</div>
<div class="c tm" style="left:305px;width:40px;">13:25</div>
<div class="c" style="left:345px;width:35px;">Sat</div>
<div class="c" style="left:380px;width:70px;"></div>
<div class="c" style="left:450px;width:40px;"></div>
<div class="c r n" style="left:490px;width:65px;">1,040.00</div>
<div class="c r n" style="left:555px;width:65px;">832.00</div>
<div class="c r n" style="left:620px;width:65px;">1,944.00</div>
<div class="c r n" style="left:685px;width:65px;">3,744.00</div>
<div class="c" style="left:750px;width:65px;">29/01/2020</div>
<div class="c" style="left:815px;width:85px;">British Airways</div>
<div class="c" style="left:900px;width:45px;">Y</div>
<div class="c" style="left:945px;width:45px;">?</div>
<div class="c" style="left:990px;width:85px;">Advanced Req</div>
<div class="c r n" style="left:1075px;width:65px;">1,040.00</div>
<div class="c" style="left:1140px;width:40px;">COM</div>
<div class="c r n" style="left:1180px;width:65px;">832.00</div>
<div class="c r" style="left:1245px;width:60px;"></div>
<div class="c" style="left:1305px;width:90px;"></div>
</div>
<div class="row yrow" style="top:92px;">
<div class="c r" style="left:0px;width:30px;">0</div>
<div class="c r" style="left:30px;width:40px;">0</div>
<div class="c" style="left:70px;width:45px;">OW</div>
<div class="c" style="left:115px;width:45px;">LGW</div>
<div class="c" style="left:160px;width:45px;">MCO</div>
<div class="c" style="left:205px;width:35px;">Sun</div>
<div class="c" style="left:240px;width:65px;">25/07/2021</div>
<div class="c tm" style="left:305px;width:40px;">13:00</div>
<div class="c" style="left:345px;width:35px;">Sun</div>
<div class="c" style="left:380px;width:70px;"></div>
<div class="c" style="left:450px;width:40px;"></div>
<div class="c r" style="left:490px;width:65px;">-</div>
<div class="c r" style="left:555px;width:65px;">-</div>
<div class="c r n" style="left:620px;width:65px;">2,034.00</div>
<div class="c r n" style="left:685px;width:65px;">3,834.00</div>
<div class="c" style="left:750px;width:65px;">29/01/2020</div>
<div class="c vg" style="left:815px;width:85px;">Virgin Atlanti...</div>
<div class="c" style="left:900px;width:45px;">Y</div>
<div class="c" style="left:945px;width:45px;">?</div>
<div class="c" style="left:990px;width:85px;">Advanced Req</div>
<div class="c r" style="left:1075px;width:65px;">-</div>
<div class="c" style="left:1140px;width:40px;">COM</div>
<div class="c r" style="left:1180px;width:65px;">-</div>
<div class="c r" style="left:1245px;width:60px;"></div>
<div class="c" style="left:1305px;width:90px;"></div>
</div>
<div class="row yrow" style="top:107px;">
<div class="c r" style="left:0px;width:30px;">0</div>
<div class="c r" style="left:30px;width:40px;">0</div>
<div class="c" style="left:70px;width:45px;">OW</div>
<div class="c" style="left:115px;width:45px;">LGW</div>
<div class="c" style="left:160px;width:45px;">MCO</div>
<div class="c" style="left:205px;width:35px;">Sun</div>
<div class="c" style="left:240px;width:65px;">25/07/2021</div>
<div class="c tm" style="left:305px;width:40px;">13:25</div>
<div class="c" style="left:345px;width:35px;">Sun</div>
<div class="c" style="left:380px;width:70px;"></div>
<div class="c" style="left:450px;width:40px;"></div>
<div class="c r n" style="left:490px;width:65px;">1,040.00</div>
<div class="c r n" style="left:555px;width:65px;">832.00</div>
<div class="c r n" style="left:620px;width:65px;">1,944.00</div>
<div class="c r n" style="left:685px;width:65px;">3,744.00</div>
<div class="c" style="left:750px;width:65px;">29/01/2020</div>
<div class="c" style="left:815px;width:85px;">British Airways</div>
<div class="c" style="left:900px;width:45px;">Y</div>
<div class="c" style="left:945px;width:45px;">?</div>
<div class="c" style="left:990px;width:85px;">Advanced Req</div>
<div class="c r n" style="left:1075px;width:65px;">1,040.00</div>
<div class="c" style="left:1140px;width:40px;">COM</div>
<div class="c r n" style="left:1180px;width:65px;">832.00</div>
<div class="c r" style="left:1245px;width:60px;"></div>
<div class="c" style="left:1305px;width:90px;"></div>
</div>
<div class="row yrow" style="top:122px;">
<div class="c r" style="left:0px;width:30px;">0</div>
<div class="c r" style="left:30px;width:40px;">0</div>
<div class="c" style="left:70px;width:45px;">OW</div>
<div class="c" style="left:115px;width:45px;">LGW</div>
<div class="c" style="left:160px;width:45px;">MCO</div>
<div class="c" style="left:205px;width:35px;">Mon</div>
<div class="c" style="left:240px;width:65px;">26/07/2021</div>
<div class="c tm" style="left:305px;width:40px;">13:00</div>
<div class="c" style="left:345px;width:35px;">Mon</div>
<div class="c" style="left:380px;width:70px;"></div>
<div class="c" style="left:450px;width:40px;"></div>
<div class="c r" style="left:490px;width:65px;">-</div>
<div class="c r" style="left:555px;width:65px;">-</div>
<div class="c r n" style="left:620px;width:65px;">1,890.00</div>
<div class="c r n" style="left:685px;width:65px;">3,690.00</div>
<div class="c" style="left:750px;width:65px;">29/01/2020</div>
<div class="c vg" style="left:815px;width:85px;">Virgin Atlanti...</div>
<div class="c" style="left:900px;width:45px;">Y</div>
<div class="c" style="left:945px;width:45px;">?</div>
<div class="c" style="left:990px;width:85px;">Advanced Req</div>
<div class="c r" style="left:1075px;width:65px;">-</div>
<div class="c" style="left:1140px;width:40px;">COM</div>
<div class="c r" style="left:1180px;width:65px;">-</div>
<div class="c r" style="left:1245px;width:60px;"></div>
<div class="c" style="left:1305px;width:90px;"></div>
</div>
<div class="row selA" style="top:137px;">
<div class="c r" style="left:0px;width:30px;">0</div>
<div class="c r" style="left:30px;width:40px;">0</div>
<div class="c" style="left:70px;width:45px;">OW</div>
<div class="c" style="left:115px;width:45px;">LGW</div>
<div class="c" style="left:160px;width:45px;">MCO</div>
<div class="c" style="left:205px;width:35px;">Mon</div>
<div class="c" style="left:240px;width:65px;">26/07/2021</div>
<div class="c tm" style="left:305px;width:40px;">13:25</div>
<div class="c" style="left:345px;width:35px;">Mon</div>
<div class="c" style="left:380px;width:70px;"></div>
<div class="c" style="left:450px;width:40px;"></div>
<div class="c r n" style="left:490px;width:65px;">1,000.00</div>
<div class="c r n" style="left:555px;width:65px;">800.00</div>
<div class="c r n" style="left:620px;width:65px;">1,800.00</div>
<div class="c r n" style="left:685px;width:65px;">3,600.00</div>
<div class="c" style="left:750px;width:65px;">29/01/2020</div>
<div class="c" style="left:815px;width:85px;">British Airways</div>
<div class="c" style="left:900px;width:45px;">Y</div>
<div class="c" style="left:945px;width:45px;">?</div>
<div class="c" style="left:990px;width:85px;">Advanced Req</div>
<div class="c r n" style="left:1075px;width:65px;">1,000.00</div>
<div class="c" style="left:1140px;width:40px;">COM</div>
<div class="c r n" style="left:1180px;width:65px;">800.00</div>
<div class="c r" style="left:1245px;width:60px;"></div>
<div class="c" style="left:1305px;width:90px;"></div>
</div>
<div class="row yrow" style="top:152px;">
<div class="c r" style="left:0px;width:30px;">0</div>
<div class="c r" style="left:30px;width:40px;">0</div>
<div class="c" style="left:70px;width:45px;">OW</div>
<div class="c" style="left:115px;width:45px;">LGW</div>
<div class="c" style="left:160px;width:45px;">MCO</div>
<div class="c" style="left:205px;width:35px;">Tue</div>
<div class="c" style="left:240px;width:65px;">27/07/2021</div>
<div class="c tm" style="left:305px;width:40px;">13:00</div>
<div class="c" style="left:345px;width:35px;">Tue</div>
<div class="c" style="left:380px;width:70px;"></div>
<div class="c" style="left:450px;width:40px;"></div>
<div class="c r" style="left:490px;width:65px;">-</div>
<div class="c r" style="left:555px;width:65px;">-</div>
<div class="c r n" style="left:620px;width:65px;">1,890.00</div>
<div class="c r n" style="left:685px;width:65px;">3,690.00</div>
<div class="c" style="left:750px;width:65px;">29/01/2020</div>
<div class="c vg" style="left:815px;width:85px;">Virgin Atlanti...</div>
<div class="c" style="left:900px;width:45px;">Y</div>
<div class="c" style="left:945px;width:45px;">?</div>
<div class="c" style="left:990px;width:85px;">Advanced Req</div>
<div class="c r" style="left:1075px;width:65px;">-</div>
<div class="c" style="left:1140px;width:40px;">COM</div>
<div class="c r" style="left:1180px;width:65px;">-</div>
<div class="c r" style="left:1245px;width:60px;"></div>
<div class="c" style="left:1305px;width:90px;"></div>
</div>
<div class="row yrow" style="top:167px;">
<div class="c r" style="left:0px;width:30px;">0</div>
<div class="c r" style="left:30px;width:40px;">0</div>
<div class="c" style="left:70px;width:45px;">OW</div>
<div class="c" style="left:115px;width:45px;">LGW</div>
<div class="c" style="left:160px;width:45px;">MCO</div>
<div class="c" style="left:205px;width:35px;">Tue</div>
<div class="c" style="left:240px;width:65px;">27/07/2021</div>
<div class="c tm" style="left:305px;width:40px;">13:25</div>
<div class="c" style="left:345px;width:35px;">Tue</div>
<div class="c" style="left:380px;width:70px;"></div>
<div class="c" style="left:450px;width:40px;"></div>
<div class="c r n" style="left:490px;width:65px;">1,000.00</div>
<div class="c r n" style="left:555px;width:65px;">800.00</div>
<div class="c r n" style="left:620px;width:65px;">1,800.00</div>
<div class="c r n" style="left:685px;width:65px;">3,600.00</div>
<div class="c" style="left:750px;width:65px;">29/01/2020</div>
<div class="c" style="left:815px;width:85px;">British Airways</div>
<div class="c" style="left:900px;width:45px;">Y</div>
<div class="c" style="left:945px;width:45px;">?</div>
<div class="c" style="left:990px;width:85px;">Advanced Req</div>
<div class="c r n" style="left:1075px;width:65px;">1,000.00</div>
<div class="c" style="left:1140px;width:40px;">COM</div>
<div class="c r n" style="left:1180px;width:65px;">800.00</div>
<div class="c r" style="left:1245px;width:60px;"></div>
<div class="c" style="left:1305px;width:90px;"></div>
</div>
<div class="row yrow" style="top:182px;">
<div class="c r" style="left:0px;width:30px;">0</div>
<div class="c r" style="left:30px;width:40px;">0</div>
<div class="c" style="left:70px;width:45px;">OW</div>
<div class="c" style="left:115px;width:45px;">LGW</div>
<div class="c" style="left:160px;width:45px;">MCO</div>
<div class="c" style="left:205px;width:35px;">Wed</div>
<div class="c" style="left:240px;width:65px;">28/07/2021</div>
<div class="c tm" style="left:305px;width:40px;">13:00</div>
<div class="c" style="left:345px;width:35px;">Wed</div>
<div class="c" style="left:380px;width:70px;"></div>
<div class="c" style="left:450px;width:40px;"></div>
<div class="c r" style="left:490px;width:65px;">-</div>
<div class="c r" style="left:555px;width:65px;">-</div>
<div class="c r n" style="left:620px;width:65px;">1,890.00</div>
<div class="c r n" style="left:685px;width:65px;">3,690.00</div>
<div class="c" style="left:750px;width:65px;">29/01/2020</div>
<div class="c vg" style="left:815px;width:85px;">Virgin Atlanti...</div>
<div class="c" style="left:900px;width:45px;">Y</div>
<div class="c" style="left:945px;width:45px;">?</div>
<div class="c" style="left:990px;width:85px;">Advanced Req</div>
<div class="c r" style="left:1075px;width:65px;">-</div>
<div class="c" style="left:1140px;width:40px;">COM</div>
<div class="c r" style="left:1180px;width:65px;">-</div>
<div class="c r" style="left:1245px;width:60px;"></div>
<div class="c" style="left:1305px;width:90px;"></div>
</div>
<div class="row yrow" style="top:197px;">
<div class="c r" style="left:0px;width:30px;">0</div>
<div class="c r" style="left:30px;width:40px;">0</div>
<div class="c" style="left:70px;width:45px;">OW</div>
<div class="c" style="left:115px;width:45px;">LGW</div>
<div class="c" style="left:160px;width:45px;">MCO</div>
<div class="c" style="left:205px;width:35px;">Wed</div>
<div class="c" style="left:240px;width:65px;">28/07/2021</div>
<div class="c tm" style="left:305px;width:40px;">13:25</div>
<div class="c" style="left:345px;width:35px;">Wed</div>
<div class="c" style="left:380px;width:70px;"></div>
<div class="c" style="left:450px;width:40px;"></div>
<div class="c r n" style="left:490px;width:65px;">1,000.00</div>
<div class="c r n" style="left:555px;width:65px;">800.00</div>
<div class="c r n" style="left:620px;width:65px;">1,800.00</div>
<div class="c r n" style="left:685px;width:65px;">3,600.00</div>
<div class="c" style="left:750px;width:65px;">29/01/2020</div>
<div class="c" style="left:815px;width:85px;">British Airways</div>
<div class="c" style="left:900px;width:45px;">Y</div>
<div class="c" style="left:945px;width:45px;">?</div>
<div class="c" style="left:990px;width:85px;">Advanced Req</div>
<div class="c r n" style="left:1075px;width:65px;">1,000.00</div>
<div class="c" style="left:1140px;width:40px;">COM</div>
<div class="c r n" style="left:1180px;width:65px;">800.00</div>
<div class="c r" style="left:1245px;width:60px;"></div>
<div class="c" style="left:1305px;width:90px;"></div>
</div>
<div class="row yrow" style="top:212px;">
<div class="c r" style="left:0px;width:30px;">0</div>
<div class="c r" style="left:30px;width:40px;">0</div>
<div class="c" style="left:70px;width:45px;">OW</div>
<div class="c" style="left:115px;width:45px;">LGW</div>
<div class="c" style="left:160px;width:45px;">MCO</div>
<div class="c" style="left:205px;width:35px;">Thu</div>
<div class="c" style="left:240px;width:65px;">29/07/2021</div>
<div class="c tm" style="left:305px;width:40px;">13:00</div>
<div class="c" style="left:345px;width:35px;">Thu</div>
<div class="c" style="left:380px;width:70px;"></div>
<div class="c" style="left:450px;width:40px;"></div>
<div class="c r" style="left:490px;width:65px;">-</div>
<div class="c r" style="left:555px;width:65px;">-</div>
<div class="c r n" style="left:620px;width:65px;">1,890.00</div>
<div class="c r n" style="left:685px;width:65px;">3,690.00</div>
<div class="c" style="left:750px;width:65px;">29/01/2020</div>
<div class="c vg" style="left:815px;width:85px;">Virgin Atlanti...</div>
<div class="c" style="left:900px;width:45px;">Y</div>
<div class="c" style="left:945px;width:45px;">?</div>
<div class="c" style="left:990px;width:85px;">Advanced Req</div>
<div class="c r" style="left:1075px;width:65px;">-</div>
<div class="c" style="left:1140px;width:40px;">COM</div>
<div class="c r" style="left:1180px;width:65px;">-</div>
<div class="c r" style="left:1245px;width:60px;"></div>
<div class="c" style="left:1305px;width:90px;"></div>
</div>
<div class="row yrow" style="top:227px;">
<div class="c r" style="left:0px;width:30px;">0</div>
<div class="c r" style="left:30px;width:40px;">0</div>
<div class="c" style="left:70px;width:45px;">OW</div>
<div class="c" style="left:115px;width:45px;">LGW</div>
<div class="c" style="left:160px;width:45px;">MCO</div>
<div class="c" style="left:205px;width:35px;">Thu</div>
<div class="c" style="left:240px;width:65px;">29/07/2021</div>
<div class="c tm" style="left:305px;width:40px;">13:25</div>
<div class="c" style="left:345px;width:35px;">Thu</div>
<div class="c" style="left:380px;width:70px;"></div>
<div class="c" style="left:450px;width:40px;"></div>
<div class="c r n" style="left:490px;width:65px;">1,000.00</div>
<div class="c r n" style="left:555px;width:65px;">800.00</div>
<div class="c r n" style="left:620px;width:65px;">1,800.00</div>
<div class="c r n" style="left:685px;width:65px;">3,600.00</div>
<div class="c" style="left:750px;width:65px;">29/01/2020</div>
<div class="c" style="left:815px;width:85px;">British Airways</div>
<div class="c" style="left:900px;width:45px;">Y</div>
<div class="c" style="left:945px;width:45px;">?</div>
<div class="c" style="left:990px;width:85px;">Advanced Req</div>
<div class="c r n" style="left:1075px;width:65px;">1,000.00</div>
<div class="c" style="left:1140px;width:40px;">COM</div>
<div class="c r n" style="left:1180px;width:65px;">800.00</div>
<div class="c r" style="left:1245px;width:60px;"></div>
<div class="c" style="left:1305px;width:90px;"></div>
</div>
<div style="left:0;top:137px;width:1366px;height:13px;border:1px solid #0067cf;"></div>
</div>
<div class="hsb" style="left:217px;top:427px;width:1369px;height:16px;"><div class="thumb" style="left:16px;width:1193px;"></div><svg class="sbl" width="17" height="17" viewBox="0 0 17 17"><path d="M9.2 4.3 L4.8 8 L9.2 11.7" fill="none" stroke="#5a5a5a" stroke-width="1.9"/></svg><svg class="sbr" width="17" height="17" viewBox="0 0 17 17"><path d="M6.8 4.3 L11.2 8 L6.8 11.7" fill="none" stroke="#5a5a5a" stroke-width="1.9"/></svg></div>
<div class="tblframe" style="left:214px;top:471px;width:1372px;height:288px;"></div>
<div class="clip" style="left:217px;top:475px;width:1368px;height:266px;">
<div class="hc" style="left:0px;width:30px;text-align:right;padding-right:2px;">N</div>
<div class="hc" style="left:30px;width:40px;text-align:right;padding-right:2px;letter-spacing:-0.5px;padding-right:3px;">STP1</div>
<div class="hc" style="left:70px;width:40px;text-align:right;padding-right:2px;letter-spacing:-0.5px;padding-right:3px;">STP2</div>
<div class="hc" style="left:110px;width:45px;padding-left:1.2px;">Flt Ty...</div>
<div class="hc" style="left:155px;width:45px;padding-left:1.2px;">Dep</div>
<div class="hc" style="left:200px;width:45px;padding-left:1.2px;">Arv</div>
<div class="hc" style="left:245px;width:35px;padding-left:1.2px;">DOW</div>
<div class="hc" style="left:280px;width:65px;padding-left:1.2px;">OB Dep ...<i class="sorta"></i></div>
<div class="hc" style="left:345px;width:40px;padding-left:1.2px;">Time</div>
<div class="hc" style="left:385px;width:35px;padding-left:1.2px;">DOW</div>
<div class="hc" style="left:420px;width:70px;padding-left:1.2px;">IB Dep Date</div>
<div class="hc" style="left:490px;width:40px;padding-left:1.2px;">Time</div>
<div class="hc" style="left:530px;width:65px;text-align:right;padding-right:2px;">AdAC</div>
<div class="hc" style="left:595px;width:65px;text-align:right;padding-right:2px;">ChAC</div>
<div class="hc" style="left:660px;width:65px;text-align:right;padding-right:2px;">Price</div>
<div class="hc" style="left:725px;width:65px;text-align:right;padding-right:2px;">Basket</div>
<div class="hc" style="left:790px;width:65px;padding-left:1.2px;">Updated</div>
<div class="hc" style="left:855px;width:85px;padding-left:1.2px;">Carrier</div>
<div class="hc" style="left:940px;width:45px;padding-left:1.2px;">Cabin</div>
<div class="hc" style="left:985px;width:45px;padding-left:1.2px;">B.C.</div>
<div class="hc" style="left:1030px;width:85px;padding-left:1.2px;">Supplier</div>
<div class="hc" style="left:1115px;width:65px;text-align:right;padding-right:2px;">AdPP</div>
<div class="hc" style="left:1180px;width:40px;padding-left:1.2px;">Type</div>
<div class="hc" style="left:1220px;width:65px;text-align:right;padding-right:2px;">ChPP</div>
<div class="hc" style="left:1285px;width:60px;text-align:right;padding-right:2px;">Priority</div>
<div class="hc" style="left:1345px;width:90px;padding-left:1.2px;">Priority desc</div>
<div class="row frow" style="top:17px;">
<div class="c r" style="left:0px;width:30px;">-</div>
<div class="c r" style="left:30px;width:40px;">-</div>
<div class="c r" style="left:70px;width:40px;">-</div>
<div class="c" style="left:110px;width:45px;">-</div>
<div class="c" style="left:155px;width:45px;">-</div>
<div class="c" style="left:200px;width:45px;">-</div>
<div class="c" style="left:245px;width:35px;"></div>
<div class="c" style="left:280px;width:65px;">-</div>
<div class="c" style="left:345px;width:40px;"></div>
<div class="c" style="left:385px;width:35px;"></div>
<div class="c" style="left:420px;width:70px;">-</div>
<div class="c" style="left:490px;width:40px;">-</div>
<div class="c r" style="left:530px;width:65px;">-</div>
<div class="c r" style="left:595px;width:65px;">-</div>
<div class="c r" style="left:660px;width:65px;">-</div>
<div class="c r" style="left:725px;width:65px;">-</div>
<div class="c" style="left:790px;width:65px;">-</div>
<div class="c" style="left:855px;width:85px;"></div>
<div class="c" style="left:940px;width:45px;">-</div>
<div class="c" style="left:985px;width:45px;">-</div>
<div class="c" style="left:1030px;width:85px;"></div>
<div class="c r" style="left:1115px;width:65px;">-</div>
<div class="c" style="left:1180px;width:40px;">-</div>
<div class="c r" style="left:1220px;width:65px;">-</div>
<div class="c r" style="left:1285px;width:60px;">-</div>
<div class="c" style="left:1345px;width:90px;">-</div>
</div>
<div class="row yrow" style="top:32px;">
<div class="c r" style="left:0px;width:30px;">0</div>
<div class="c r" style="left:30px;width:40px;">0</div>
<div class="c r" style="left:70px;width:40px;">0</div>
<div class="c" style="left:110px;width:45px;">OW</div>
<div class="c" style="left:155px;width:45px;">MCO</div>
<div class="c" style="left:200px;width:45px;">LGW</div>
<div class="c" style="left:245px;width:35px;">Fri</div>
<div class="c" style="left:280px;width:65px;">06/08/2021</div>
<div class="c tm" style="left:345px;width:40px;">19:55</div>
<div class="c" style="left:385px;width:35px;">Sat</div>
<div class="c" style="left:420px;width:70px;"></div>
<div class="c" style="left:490px;width:40px;"></div>
<div class="c r n" style="left:530px;width:65px;">1,040.00</div>
<div class="c r n" style="left:595px;width:65px;">832.00</div>
<div class="c r n" style="left:660px;width:65px;">1,944.00</div>
<div class="c r n" style="left:725px;width:65px;">3,744.00</div>
<div class="c" style="left:790px;width:65px;">29/01/2020</div>
<div class="c" style="left:855px;width:85px;">British Airways</div>
<div class="c" style="left:940px;width:45px;">Y</div>
<div class="c" style="left:985px;width:45px;">?</div>
<div class="c" style="left:1030px;width:85px;">Advanced Req</div>
<div class="c r n" style="left:1115px;width:65px;">1,040.00</div>
<div class="c" style="left:1180px;width:40px;">COM</div>
<div class="c r n" style="left:1220px;width:65px;">832.00</div>
<div class="c r" style="left:1285px;width:60px;"></div>
<div class="c" style="left:1345px;width:90px;"></div>
</div>
<div class="row yrow" style="top:47px;">
<div class="c r" style="left:0px;width:30px;">0</div>
<div class="c r" style="left:30px;width:40px;">0</div>
<div class="c r" style="left:70px;width:40px;">0</div>
<div class="c" style="left:110px;width:45px;">OW</div>
<div class="c" style="left:155px;width:45px;">MCO</div>
<div class="c" style="left:200px;width:45px;">LGW</div>
<div class="c" style="left:245px;width:35px;">Fri</div>
<div class="c" style="left:280px;width:65px;">06/08/2021</div>
<div class="c tm" style="left:345px;width:40px;">19:50</div>
<div class="c" style="left:385px;width:35px;">Sat</div>
<div class="c" style="left:420px;width:70px;"></div>
<div class="c" style="left:490px;width:40px;"></div>
<div class="c r" style="left:530px;width:65px;">-</div>
<div class="c r" style="left:595px;width:65px;">-</div>
<div class="c r n" style="left:660px;width:65px;">2,034.00</div>
<div class="c r n" style="left:725px;width:65px;">3,834.00</div>
<div class="c" style="left:790px;width:65px;">29/01/2020</div>
<div class="c vg" style="left:855px;width:85px;">Virgin Atlanti...</div>
<div class="c" style="left:940px;width:45px;">Y</div>
<div class="c" style="left:985px;width:45px;">?</div>
<div class="c" style="left:1030px;width:85px;">Advanced Req</div>
<div class="c r" style="left:1115px;width:65px;">-</div>
<div class="c" style="left:1180px;width:40px;">COM</div>
<div class="c r" style="left:1220px;width:65px;">-</div>
<div class="c r" style="left:1285px;width:60px;"></div>
<div class="c" style="left:1345px;width:90px;"></div>
</div>
<div class="row yrow" style="top:62px;">
<div class="c r" style="left:0px;width:30px;">0</div>
<div class="c r" style="left:30px;width:40px;">0</div>
<div class="c r" style="left:70px;width:40px;">0</div>
<div class="c" style="left:110px;width:45px;">OW</div>
<div class="c" style="left:155px;width:45px;">MCO</div>
<div class="c" style="left:200px;width:45px;">LGW</div>
<div class="c" style="left:245px;width:35px;">Sat</div>
<div class="c" style="left:280px;width:65px;">07/08/2021</div>
<div class="c tm" style="left:345px;width:40px;">19:55</div>
<div class="c" style="left:385px;width:35px;">Sun</div>
<div class="c" style="left:420px;width:70px;"></div>
<div class="c" style="left:490px;width:40px;"></div>
<div class="c r n" style="left:530px;width:65px;">1,040.00</div>
<div class="c r n" style="left:595px;width:65px;">832.00</div>
<div class="c r n" style="left:660px;width:65px;">1,944.00</div>
<div class="c r n" style="left:725px;width:65px;">3,744.00</div>
<div class="c" style="left:790px;width:65px;">29/01/2020</div>
<div class="c" style="left:855px;width:85px;">British Airways</div>
<div class="c" style="left:940px;width:45px;">Y</div>
<div class="c" style="left:985px;width:45px;">?</div>
<div class="c" style="left:1030px;width:85px;">Advanced Req</div>
<div class="c r n" style="left:1115px;width:65px;">1,040.00</div>
<div class="c" style="left:1180px;width:40px;">COM</div>
<div class="c r n" style="left:1220px;width:65px;">832.00</div>
<div class="c r" style="left:1285px;width:60px;"></div>
<div class="c" style="left:1345px;width:90px;"></div>
</div>
<div class="row yrow" style="top:77px;">
<div class="c r" style="left:0px;width:30px;">0</div>
<div class="c r" style="left:30px;width:40px;">0</div>
<div class="c r" style="left:70px;width:40px;">0</div>
<div class="c" style="left:110px;width:45px;">OW</div>
<div class="c" style="left:155px;width:45px;">MCO</div>
<div class="c" style="left:200px;width:45px;">LGW</div>
<div class="c" style="left:245px;width:35px;">Sat</div>
<div class="c" style="left:280px;width:65px;">07/08/2021</div>
<div class="c tm" style="left:345px;width:40px;">19:50</div>
<div class="c" style="left:385px;width:35px;">Sun</div>
<div class="c" style="left:420px;width:70px;"></div>
<div class="c" style="left:490px;width:40px;"></div>
<div class="c r" style="left:530px;width:65px;">-</div>
<div class="c r" style="left:595px;width:65px;">-</div>
<div class="c r n" style="left:660px;width:65px;">2,034.00</div>
<div class="c r n" style="left:725px;width:65px;">3,834.00</div>
<div class="c" style="left:790px;width:65px;">29/01/2020</div>
<div class="c vg" style="left:855px;width:85px;">Virgin Atlanti...</div>
<div class="c" style="left:940px;width:45px;">Y</div>
<div class="c" style="left:985px;width:45px;">?</div>
<div class="c" style="left:1030px;width:85px;">Advanced Req</div>
<div class="c r" style="left:1115px;width:65px;">-</div>
<div class="c" style="left:1180px;width:40px;">COM</div>
<div class="c r" style="left:1220px;width:65px;">-</div>
<div class="c r" style="left:1285px;width:60px;"></div>
<div class="c" style="left:1345px;width:90px;"></div>
</div>
<div class="row yrow" style="top:92px;">
<div class="c r" style="left:0px;width:30px;">0</div>
<div class="c r" style="left:30px;width:40px;">0</div>
<div class="c r" style="left:70px;width:40px;">0</div>
<div class="c" style="left:110px;width:45px;">OW</div>
<div class="c" style="left:155px;width:45px;">MCO</div>
<div class="c" style="left:200px;width:45px;">LGW</div>
<div class="c" style="left:245px;width:35px;">Sun</div>
<div class="c" style="left:280px;width:65px;">08/08/2021</div>
<div class="c tm" style="left:345px;width:40px;">19:55</div>
<div class="c" style="left:385px;width:35px;">Mon</div>
<div class="c" style="left:420px;width:70px;"></div>
<div class="c" style="left:490px;width:40px;"></div>
<div class="c r n" style="left:530px;width:65px;">1,040.00</div>
<div class="c r n" style="left:595px;width:65px;">832.00</div>
<div class="c r n" style="left:660px;width:65px;">1,944.00</div>
<div class="c r n" style="left:725px;width:65px;">3,744.00</div>
<div class="c" style="left:790px;width:65px;">29/01/2020</div>
<div class="c" style="left:855px;width:85px;">British Airways</div>
<div class="c" style="left:940px;width:45px;">Y</div>
<div class="c" style="left:985px;width:45px;">?</div>
<div class="c" style="left:1030px;width:85px;">Advanced Req</div>
<div class="c r n" style="left:1115px;width:65px;">1,040.00</div>
<div class="c" style="left:1180px;width:40px;">COM</div>
<div class="c r n" style="left:1220px;width:65px;">832.00</div>
<div class="c r" style="left:1285px;width:60px;"></div>
<div class="c" style="left:1345px;width:90px;"></div>
</div>
<div class="row yrow" style="top:107px;">
<div class="c r" style="left:0px;width:30px;">0</div>
<div class="c r" style="left:30px;width:40px;">0</div>
<div class="c r" style="left:70px;width:40px;">0</div>
<div class="c" style="left:110px;width:45px;">OW</div>
<div class="c" style="left:155px;width:45px;">MCO</div>
<div class="c" style="left:200px;width:45px;">LGW</div>
<div class="c" style="left:245px;width:35px;">Sun</div>
<div class="c" style="left:280px;width:65px;">08/08/2021</div>
<div class="c tm" style="left:345px;width:40px;">19:50</div>
<div class="c" style="left:385px;width:35px;">Mon</div>
<div class="c" style="left:420px;width:70px;"></div>
<div class="c" style="left:490px;width:40px;"></div>
<div class="c r" style="left:530px;width:65px;">-</div>
<div class="c r" style="left:595px;width:65px;">-</div>
<div class="c r n" style="left:660px;width:65px;">2,034.00</div>
<div class="c r n" style="left:725px;width:65px;">3,834.00</div>
<div class="c" style="left:790px;width:65px;">29/01/2020</div>
<div class="c vg" style="left:855px;width:85px;">Virgin Atlanti...</div>
<div class="c" style="left:940px;width:45px;">Y</div>
<div class="c" style="left:985px;width:45px;">?</div>
<div class="c" style="left:1030px;width:85px;">Advanced Req</div>
<div class="c r" style="left:1115px;width:65px;">-</div>
<div class="c" style="left:1180px;width:40px;">COM</div>
<div class="c r" style="left:1220px;width:65px;">-</div>
<div class="c r" style="left:1285px;width:60px;"></div>
<div class="c" style="left:1345px;width:90px;"></div>
</div>
<div class="row selB" style="top:122px;">
<div class="c r" style="left:0px;width:30px;">0</div>
<div class="c r" style="left:30px;width:40px;">0</div>
<div class="c r" style="left:70px;width:40px;">0</div>
<div class="c" style="left:110px;width:45px;">OW</div>
<div class="c" style="left:155px;width:45px;">MCO</div>
<div class="c" style="left:200px;width:45px;">LGW</div>
<div class="c" style="left:245px;width:35px;">Mon</div>
<div class="c" style="left:280px;width:65px;">09/08/2021</div>
<div class="c tm" style="left:345px;width:40px;">19:55</div>
<div class="c" style="left:385px;width:35px;">Tue</div>
<div class="c" style="left:420px;width:70px;"></div>
<div class="c" style="left:490px;width:40px;"></div>
<div class="c r n" style="left:530px;width:65px;">1,000.00</div>
<div class="c r n" style="left:595px;width:65px;">800.00</div>
<div class="c r n" style="left:660px;width:65px;">1,800.00</div>
<div class="c r n" style="left:725px;width:65px;">3,600.00</div>
<div class="c" style="left:790px;width:65px;">29/01/2020</div>
<div class="c" style="left:855px;width:85px;">British Airways</div>
<div class="c" style="left:940px;width:45px;">Y</div>
<div class="c" style="left:985px;width:45px;">?</div>
<div class="c" style="left:1030px;width:85px;">Advanced Req</div>
<div class="c r n" style="left:1115px;width:65px;">1,000.00</div>
<div class="c" style="left:1180px;width:40px;">COM</div>
<div class="c r n" style="left:1220px;width:65px;">800.00</div>
<div class="c r" style="left:1285px;width:60px;"></div>
<div class="c" style="left:1345px;width:90px;"></div>
</div>
<div class="row yrow" style="top:137px;">
<div class="c r" style="left:0px;width:30px;">0</div>
<div class="c r" style="left:30px;width:40px;">0</div>
<div class="c r" style="left:70px;width:40px;">0</div>
<div class="c" style="left:110px;width:45px;">OW</div>
<div class="c" style="left:155px;width:45px;">MCO</div>
<div class="c" style="left:200px;width:45px;">LGW</div>
<div class="c" style="left:245px;width:35px;">Mon</div>
<div class="c" style="left:280px;width:65px;">09/08/2021</div>
<div class="c tm" style="left:345px;width:40px;">19:50</div>
<div class="c" style="left:385px;width:35px;">Tue</div>
<div class="c" style="left:420px;width:70px;"></div>
<div class="c" style="left:490px;width:40px;"></div>
<div class="c r" style="left:530px;width:65px;">-</div>
<div class="c r" style="left:595px;width:65px;">-</div>
<div class="c r n" style="left:660px;width:65px;">1,890.00</div>
<div class="c r n" style="left:725px;width:65px;">3,690.00</div>
<div class="c" style="left:790px;width:65px;">29/01/2020</div>
<div class="c vg" style="left:855px;width:85px;">Virgin Atlanti...</div>
<div class="c" style="left:940px;width:45px;">Y</div>
<div class="c" style="left:985px;width:45px;">?</div>
<div class="c" style="left:1030px;width:85px;">Advanced Req</div>
<div class="c r" style="left:1115px;width:65px;">-</div>
<div class="c" style="left:1180px;width:40px;">COM</div>
<div class="c r" style="left:1220px;width:65px;">-</div>
<div class="c r" style="left:1285px;width:60px;"></div>
<div class="c" style="left:1345px;width:90px;"></div>
</div>
<div class="row yrow" style="top:152px;">
<div class="c r" style="left:0px;width:30px;">0</div>
<div class="c r" style="left:30px;width:40px;">0</div>
<div class="c r" style="left:70px;width:40px;">0</div>
<div class="c" style="left:110px;width:45px;">OW</div>
<div class="c" style="left:155px;width:45px;">MCO</div>
<div class="c" style="left:200px;width:45px;">LGW</div>
<div class="c" style="left:245px;width:35px;">Tue</div>
<div class="c" style="left:280px;width:65px;">10/08/2021</div>
<div class="c tm" style="left:345px;width:40px;">19:55</div>
<div class="c" style="left:385px;width:35px;">Wed</div>
<div class="c" style="left:420px;width:70px;"></div>
<div class="c" style="left:490px;width:40px;"></div>
<div class="c r n" style="left:530px;width:65px;">1,000.00</div>
<div class="c r n" style="left:595px;width:65px;">800.00</div>
<div class="c r n" style="left:660px;width:65px;">1,800.00</div>
<div class="c r n" style="left:725px;width:65px;">3,600.00</div>
<div class="c" style="left:790px;width:65px;">29/01/2020</div>
<div class="c" style="left:855px;width:85px;">British Airways</div>
<div class="c" style="left:940px;width:45px;">Y</div>
<div class="c" style="left:985px;width:45px;">?</div>
<div class="c" style="left:1030px;width:85px;">Advanced Req</div>
<div class="c r n" style="left:1115px;width:65px;">1,000.00</div>
<div class="c" style="left:1180px;width:40px;">COM</div>
<div class="c r n" style="left:1220px;width:65px;">800.00</div>
<div class="c r" style="left:1285px;width:60px;"></div>
<div class="c" style="left:1345px;width:90px;"></div>
</div>
<div class="row yrow" style="top:167px;">
<div class="c r" style="left:0px;width:30px;">0</div>
<div class="c r" style="left:30px;width:40px;">0</div>
<div class="c r" style="left:70px;width:40px;">0</div>
<div class="c" style="left:110px;width:45px;">OW</div>
<div class="c" style="left:155px;width:45px;">MCO</div>
<div class="c" style="left:200px;width:45px;">LGW</div>
<div class="c" style="left:245px;width:35px;">Tue</div>
<div class="c" style="left:280px;width:65px;">10/08/2021</div>
<div class="c tm" style="left:345px;width:40px;">19:50</div>
<div class="c" style="left:385px;width:35px;">Wed</div>
<div class="c" style="left:420px;width:70px;"></div>
<div class="c" style="left:490px;width:40px;"></div>
<div class="c r" style="left:530px;width:65px;">-</div>
<div class="c r" style="left:595px;width:65px;">-</div>
<div class="c r n" style="left:660px;width:65px;">1,890.00</div>
<div class="c r n" style="left:725px;width:65px;">3,690.00</div>
<div class="c" style="left:790px;width:65px;">29/01/2020</div>
<div class="c vg" style="left:855px;width:85px;">Virgin Atlanti...</div>
<div class="c" style="left:940px;width:45px;">Y</div>
<div class="c" style="left:985px;width:45px;">?</div>
<div class="c" style="left:1030px;width:85px;">Advanced Req</div>
<div class="c r" style="left:1115px;width:65px;">-</div>
<div class="c" style="left:1180px;width:40px;">COM</div>
<div class="c r" style="left:1220px;width:65px;">-</div>
<div class="c r" style="left:1285px;width:60px;"></div>
<div class="c" style="left:1345px;width:90px;"></div>
</div>
<div class="row yrow" style="top:182px;">
<div class="c r" style="left:0px;width:30px;">0</div>
<div class="c r" style="left:30px;width:40px;">0</div>
<div class="c r" style="left:70px;width:40px;">0</div>
<div class="c" style="left:110px;width:45px;">OW</div>
<div class="c" style="left:155px;width:45px;">MCO</div>
<div class="c" style="left:200px;width:45px;">LGW</div>
<div class="c" style="left:245px;width:35px;">Wed</div>
<div class="c" style="left:280px;width:65px;">11/08/2021</div>
<div class="c tm" style="left:345px;width:40px;">19:55</div>
<div class="c" style="left:385px;width:35px;">Thu</div>
<div class="c" style="left:420px;width:70px;"></div>
<div class="c" style="left:490px;width:40px;"></div>
<div class="c r n" style="left:530px;width:65px;">1,000.00</div>
<div class="c r n" style="left:595px;width:65px;">800.00</div>
<div class="c r n" style="left:660px;width:65px;">1,800.00</div>
<div class="c r n" style="left:725px;width:65px;">3,600.00</div>
<div class="c" style="left:790px;width:65px;">29/01/2020</div>
<div class="c" style="left:855px;width:85px;">British Airways</div>
<div class="c" style="left:940px;width:45px;">Y</div>
<div class="c" style="left:985px;width:45px;">?</div>
<div class="c" style="left:1030px;width:85px;">Advanced Req</div>
<div class="c r n" style="left:1115px;width:65px;">1,000.00</div>
<div class="c" style="left:1180px;width:40px;">COM</div>
<div class="c r n" style="left:1220px;width:65px;">800.00</div>
<div class="c r" style="left:1285px;width:60px;"></div>
<div class="c" style="left:1345px;width:90px;"></div>
</div>
<div class="row yrow" style="top:197px;">
<div class="c r" style="left:0px;width:30px;">0</div>
<div class="c r" style="left:30px;width:40px;">0</div>
<div class="c r" style="left:70px;width:40px;">0</div>
<div class="c" style="left:110px;width:45px;">OW</div>
<div class="c" style="left:155px;width:45px;">MCO</div>
<div class="c" style="left:200px;width:45px;">LGW</div>
<div class="c" style="left:245px;width:35px;">Wed</div>
<div class="c" style="left:280px;width:65px;">11/08/2021</div>
<div class="c tm" style="left:345px;width:40px;">19:50</div>
<div class="c" style="left:385px;width:35px;">Thu</div>
<div class="c" style="left:420px;width:70px;"></div>
<div class="c" style="left:490px;width:40px;"></div>
<div class="c r" style="left:530px;width:65px;">-</div>
<div class="c r" style="left:595px;width:65px;">-</div>
<div class="c r n" style="left:660px;width:65px;">1,890.00</div>
<div class="c r n" style="left:725px;width:65px;">3,690.00</div>
<div class="c" style="left:790px;width:65px;">29/01/2020</div>
<div class="c vg" style="left:855px;width:85px;">Virgin Atlanti...</div>
<div class="c" style="left:940px;width:45px;">Y</div>
<div class="c" style="left:985px;width:45px;">?</div>
<div class="c" style="left:1030px;width:85px;">Advanced Req</div>
<div class="c r" style="left:1115px;width:65px;">-</div>
<div class="c" style="left:1180px;width:40px;">COM</div>
<div class="c r" style="left:1220px;width:65px;">-</div>
<div class="c r" style="left:1285px;width:60px;"></div>
<div class="c" style="left:1345px;width:90px;"></div>
</div>
<div class="row yrow" style="top:212px;">
<div class="c r" style="left:0px;width:30px;">0</div>
<div class="c r" style="left:30px;width:40px;">0</div>
<div class="c r" style="left:70px;width:40px;">0</div>
<div class="c" style="left:110px;width:45px;">OW</div>
<div class="c" style="left:155px;width:45px;">MCO</div>
<div class="c" style="left:200px;width:45px;">LGW</div>
<div class="c" style="left:245px;width:35px;">Thu</div>
<div class="c" style="left:280px;width:65px;">12/08/2021</div>
<div class="c tm" style="left:345px;width:40px;">19:55</div>
<div class="c" style="left:385px;width:35px;">Fri</div>
<div class="c" style="left:420px;width:70px;"></div>
<div class="c" style="left:490px;width:40px;"></div>
<div class="c r n" style="left:530px;width:65px;">1,000.00</div>
<div class="c r n" style="left:595px;width:65px;">800.00</div>
<div class="c r n" style="left:660px;width:65px;">1,800.00</div>
<div class="c r n" style="left:725px;width:65px;">3,600.00</div>
<div class="c" style="left:790px;width:65px;">29/01/2020</div>
<div class="c" style="left:855px;width:85px;">British Airways</div>
<div class="c" style="left:940px;width:45px;">Y</div>
<div class="c" style="left:985px;width:45px;">?</div>
<div class="c" style="left:1030px;width:85px;">Advanced Req</div>
<div class="c r n" style="left:1115px;width:65px;">1,000.00</div>
<div class="c" style="left:1180px;width:40px;">COM</div>
<div class="c r n" style="left:1220px;width:65px;">800.00</div>
<div class="c r" style="left:1285px;width:60px;"></div>
<div class="c" style="left:1345px;width:90px;"></div>
</div>
<div class="row yrow" style="top:227px;">
<div class="c r" style="left:0px;width:30px;">0</div>
<div class="c r" style="left:30px;width:40px;">0</div>
<div class="c r" style="left:70px;width:40px;">0</div>
<div class="c" style="left:110px;width:45px;">OW</div>
<div class="c" style="left:155px;width:45px;">MCO</div>
<div class="c" style="left:200px;width:45px;">LGW</div>
<div class="c" style="left:245px;width:35px;">Thu</div>
<div class="c" style="left:280px;width:65px;">12/08/2021</div>
<div class="c tm" style="left:345px;width:40px;">19:50</div>
<div class="c" style="left:385px;width:35px;">Fri</div>
<div class="c" style="left:420px;width:70px;"></div>
<div class="c" style="left:490px;width:40px;"></div>
<div class="c r" style="left:530px;width:65px;">-</div>
<div class="c r" style="left:595px;width:65px;">-</div>
<div class="c r n" style="left:660px;width:65px;">1,890.00</div>
<div class="c r n" style="left:725px;width:65px;">3,690.00</div>
<div class="c" style="left:790px;width:65px;">29/01/2020</div>
<div class="c vg" style="left:855px;width:85px;">Virgin Atlanti...</div>
<div class="c" style="left:940px;width:45px;">Y</div>
<div class="c" style="left:985px;width:45px;">?</div>
<div class="c" style="left:1030px;width:85px;">Advanced Req</div>
<div class="c r" style="left:1115px;width:65px;">-</div>
<div class="c" style="left:1180px;width:40px;">COM</div>
<div class="c r" style="left:1220px;width:65px;">-</div>
<div class="c r" style="left:1285px;width:60px;"></div>
<div class="c" style="left:1345px;width:90px;"></div>
</div>
<div style="left:0;top:122px;width:1366px;height:13px;border:1px solid #2b88de;"></div>
</div>
<div class="hsb" style="left:217px;top:743px;width:1369px;height:16px;"><div class="thumb" style="left:16px;width:1198px;"></div><svg class="sbl" width="17" height="17" viewBox="0 0 17 17"><path d="M9.2 4.3 L4.8 8 L9.2 11.7" fill="none" stroke="#5a5a5a" stroke-width="1.9"/></svg><svg class="sbr" width="17" height="17" viewBox="0 0 17 17"><path d="M6.8 4.3 L11.2 8 L6.8 11.7" fill="none" stroke="#5a5a5a" stroke-width="1.9"/></svg></div>
<div class="t" style="left:220px;top:775px;line-height:20px;font-size:11.6px;color:#000;letter-spacing:-0.013px;">First portion: 2.8 sec, total search time: 118.8 sec</div>
<div class="t" style="left:1566.6px;top:776px;line-height:20px;font-size:17px;color:#0b4f9e;font-weight:700;font-family:'Liberation Serif',serif;">i</div>
<div style="left:212px;top:801px;width:1379px;height:1px;background:#a0a0a0;"></div>
<div style="left:212px;top:802px;width:59px;height:19px;border-right:1px solid #a0a0a0;"></div>
<div class="t" style="left:216px;top:801px;line-height:20px;font-size:11.6px;color:#000;letter-spacing:0.127px;">Summary</div>
<div style="left:272px;top:802px;width:42px;height:19px;border-right:1px solid #a0a0a0;"></div>
<div class="t" style="left:274.8px;top:801px;line-height:20px;font-size:11.6px;color:#000;letter-spacing:-0.339px;">Search</div>
<div style="left:315px;top:802px;width:147px;height:19px;background:#c8ffc0;"></div>
<div class="t" style="left:318.2px;top:801px;line-height:20px;font-size:11.6px;color:#000;letter-spacing:0.121px;">Flt 2A,2C MAN MCO MAN</div>
<div style="left:463px;top:801px;width:140px;height:19px;background:#000080;"></div>
<div class="t" style="left:466.5px;top:801px;line-height:20px;font-size:11.6px;color:#fff;letter-spacing:-0.217px;">Flt 2A,2C LGW MCO LGW</div>
<div style="left:604px;top:802px;width:108px;height:19px;border-right:1px solid #a0a0a0;"></div>
<div class="t" style="left:608.5px;top:801px;line-height:20px;font-size:11.6px;color:#000;letter-spacing:0.045px;">Financial Summary</div>
<div style="left:713px;top:802px;width:111px;height:19px;border-right:1px solid #a0a0a0;"></div>
<div class="t" style="left:717px;top:801px;line-height:20px;font-size:11.6px;color:#000;letter-spacing:0.236px;">Identity Documents</div>
<div class="t" style="left:3.2px;top:827px;line-height:20px;font-size:11.5px;color:#000;letter-spacing:-0.068px;">369/818</div>
<div class="t" style="left:770.3px;top:827px;line-height:20px;font-size:11.5px;color:#000;letter-spacing:-0.131px;">User: 690 - Owen Green</div>
<div class="t" style="left:904.3px;top:827px;line-height:20px;font-size:11.5px;color:#000;letter-spacing:0.085px;">Retailer: 'Ocean-Florida'</div>
<div class="t" style="left:1041.3px;top:827px;line-height:20px;font-size:11.5px;color:#000;letter-spacing:0.194px;">Client: none</div>
<div class="t" style="left:1534.6px;top:827px;line-height:20px;font-size:11.5px;color:#000;letter-spacing:-0.337px;">10:05 GMT</div>
<div style="left:0px;top:854px;width:1596px;height:30px;background:#04090f;"></div>
<div style="left:97px;top:854px;width:160px;height:30px;background:#333b45;"></div>
<svg style="left:13px;top:865px" width="18" height="19" viewBox="13 865 18 19"><path d="M13.8 867.5 L20.2 866.6 V873 H13.8 Z M21.2 866.5 L30.2 865.3 V873 H21.2 Z M13.8 874 H20.2 V880.9 L13.8 880 Z M21.2 874 H30.2 V882.2 L21.2 881 Z" fill="#fff"/></svg>
<svg style="left:60px;top:865px" width="20" height="19" viewBox="60 865 20 19"><g fill="none" stroke="#fff" stroke-width="1.3"><rect x="62.5" y="871.2" width="10" height="5"/><path d="M62.5 866 V868.4 H72.5 V866 M62.5 881.2 V878.8 H72.5 V881.2"/><path d="M76.6 866 V869.6 M76.6 874 V881.2" stroke-width="1.1"/></g><rect x="75.2" y="870.2" width="2.8" height="2.8" fill="#fff"/></svg>
<div style="left:107px;top:862px;width:24px;height:22px;background:#fff;"></div>
<svg style="left:106px;top:862px" width="26" height="22" viewBox="106 862 26 22"><path d="M108.4 873.5 L111.6 867.2 L121.3 867.4 L129.6 871 L119.3 881 Z" fill="url(#gem)" stroke="url(#gem)" stroke-width="0.8" stroke-linejoin="round"/></svg>
<div class="t" style="left:135px;top:864px;line-height:20px;font-size:11.8px;color:#fff;letter-spacing:-0.036px;">Interactive - Ocean...</div>
<div class="t" style="left:1496.7px;top:855px;line-height:20px;font-size:12px;color:#fff;letter-spacing:-0.746px;">10:05</div>
<div class="t" style="left:1482px;top:872px;line-height:20px;font-size:12px;color:#fff;letter-spacing:-0.306px;">29/01/2020</div>
<svg style="left:1407px;top:866px" width="17" height="17" viewBox="0 0 17 17"><path d="M1 5 L4 2 L8 4 V9 H1 Z" fill="#f2a81c"/><path d="M8 3 L16 2 V9 H8 Z" fill="#2a86e0"/><path d="M1 9 H8 V16 L1 14 Z" fill="#3aa836"/><path d="M8 9 H16 V14 L8 17 Z" fill="#e03a1c"/></svg>
<svg style="left:1431px;top:867px" width="18" height="16" viewBox="0 0 18 16"><g fill="none" stroke="#fff" stroke-width="1.2"><rect x="3.6" y="1.6" width="11.8" height="9"/><path d="M9.6 10.6 V13.6 M6 14 H13.4"/><rect x="0.6" y="1.6" width="4" height="3"/><path d="M2.6 4.6 V14"/></g></svg>
<svg style="left:1454px;top:866px" width="22" height="18" viewBox="0 0 22 18"><path d="M1.6 6 H3.6 L7 2.6 V13.4 L3.6 10 H1.6 Z" fill="none" stroke="#fff" stroke-width="1.1"/><circle cx="12.3" cy="11.6" r="4.2" fill="#e81123"/><path d="M10.4 9.7 L14.2 13.5 M14.2 9.7 L10.4 13.5" stroke="#fff" stroke-width="1.2"/></svg>
<svg style="left:1557px;top:866px" width="17" height="18" viewBox="0 0 17 18"><path d="M0.8 0.8 H15.8 V11.8 H10.4 L8.2 14.4 L6 11.8 H0.8 Z" fill="none" stroke="#fff" stroke-width="1.2"/></svg>
<div style="left:1594px;top:854px;width:1px;height:30px;background:#5a6068;"></div>
</body></html>
